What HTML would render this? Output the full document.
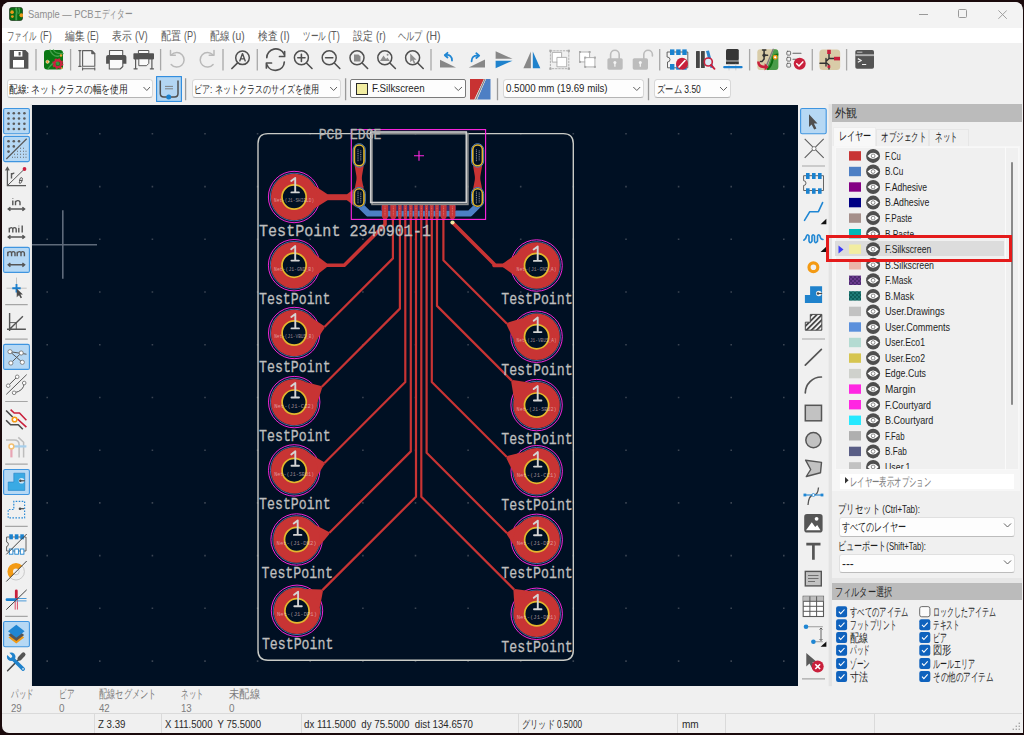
<!DOCTYPE html>
<html><head><meta charset="utf-8">
<style>
*{box-sizing:border-box;margin:0;padding:0}
html,body{width:1024px;height:735px;overflow:hidden;background:#1a0a0c;font-family:"Liberation Sans",sans-serif;font-size:12px;color:#222;position:relative}
.a{position:absolute}
.t{position:absolute;white-space:nowrap;line-height:1;transform-origin:0 0}
#win{position:absolute;left:2px;top:2px;width:1020.8px;height:731.2px;border-radius:8px 8px 0 7px;overflow:hidden;background:#f0f0f0}
.combo{position:absolute;top:79.4px;height:19px;background:#fdfdfd;border:1px solid #d8d8d8;border-bottom-color:#b4b4b4;border-radius:3.5px}
.chev{position:absolute;top:86.5px}
.st1{color:#7d7d7d;font-size:12px}
.st2{color:#2a2a2a;font-size:11px}
</style></head><body>
<div id="win">
  <div class="a" style="left:0;top:0;width:1020px;height:26px;background:#f3f3f3"></div>
  <div class="a" style="left:0;top:26px;width:1020px;height:15px;background:#fff"></div>
  <div class="a" style="left:0;top:710.5px;width:1020px;height:1px;background:#dadada"></div>
</div>
<!-- title -->
<svg class="a" style="left:8.6px;top:6.8px" width="14" height="14" viewBox="0 0 15 15">
  <rect x="0.5" y="0.5" width="14" height="14" rx="2.5" fill="#0b6b12" stroke="#1f3a1f" stroke-width="0.8"/>
  <path d="M7.5 0.5C8.5 4 8.5 6 7.8 9V14.5" stroke="#44a04a" stroke-width="2" fill="none"/>
  <path d="M10.5 0.5C11.5 3 11.5 5 10.5 7.5" stroke="#44a04a" stroke-width="1.3" fill="none"/>
  <circle cx="3.3" cy="5.5" r="1.9" fill="#ea9a1c"/><circle cx="3.6" cy="10.3" r="1.5" fill="#ea9a1c"/><circle cx="13.3" cy="8.8" r="2.1" fill="#ea9a1c"/>
</svg>
<svg class="a" style="left:27.50px;top:0;overflow:visible" width="1" height="1"><text x="0" y="18.33" font-size="11.5" fill="#8e8e8e" textLength="65.50" lengthAdjust="spacingAndGlyphs" style="white-space:pre">Sample — PCB</text></svg>
<svg class="a" style="left:93.75px;top:0;overflow:visible" width="1" height="1"><text x="0" y="18.33" font-size="11.5" fill="#8e8e8e" textLength="38.25" lengthAdjust="spacingAndGlyphs" style="white-space:pre">エディター</text></svg>
<div class="a" style="left:918.8px;top:13.8px;width:9px;height:1px;background:#999"></div>
<div class="a" style="left:958.1px;top:9.4px;width:8.6px;height:8.6px;border:1px solid #999;border-radius:1.5px"></div>
<svg class="a" style="left:997.8px;top:9.5px" width="9.2" height="9.2" viewBox="0 0 9.2 9.2"><path d="M0.4 0.4L8.8 8.8M8.8 0.4L0.4 8.8" stroke="#999" stroke-width="0.95"/></svg>
<!-- menu -->
<svg class="a" style="left:7.30px;top:0;overflow:visible" width="1" height="1"><text x="0" y="40.16" font-size="12" fill="#5c5c5c" textLength="29.30" lengthAdjust="spacingAndGlyphs" style="white-space:pre">ファイル</text></svg>
<svg class="a" style="left:39.60px;top:0;overflow:visible" width="1" height="1"><text x="0" y="40.16" font-size="12" fill="#5c5c5c" textLength="11.70" lengthAdjust="spacingAndGlyphs" style="white-space:pre">(F)</text></svg>
<svg class="a" style="left:64.70px;top:0;overflow:visible" width="1" height="1"><text x="0" y="40.16" font-size="12" fill="#5c5c5c" textLength="19.50" lengthAdjust="spacingAndGlyphs" style="white-space:pre">編集</text></svg>
<svg class="a" style="left:87.20px;top:0;overflow:visible" width="1" height="1"><text x="0" y="40.16" font-size="12" fill="#5c5c5c" textLength="11.70" lengthAdjust="spacingAndGlyphs" style="white-space:pre">(E)</text></svg>
<svg class="a" style="left:112.30px;top:0;overflow:visible" width="1" height="1"><text x="0" y="40.16" font-size="12" fill="#5c5c5c" textLength="19.50" lengthAdjust="spacingAndGlyphs" style="white-space:pre">表示</text></svg>
<svg class="a" style="left:135.00px;top:0;overflow:visible" width="1" height="1"><text x="0" y="40.16" font-size="12" fill="#5c5c5c" textLength="12.70" lengthAdjust="spacingAndGlyphs" style="white-space:pre">(V)</text></svg>
<svg class="a" style="left:160.60px;top:0;overflow:visible" width="1" height="1"><text x="0" y="40.16" font-size="12" fill="#5c5c5c" textLength="20.10" lengthAdjust="spacingAndGlyphs" style="white-space:pre">配置</text></svg>
<svg class="a" style="left:183.60px;top:0;overflow:visible" width="1" height="1"><text x="0" y="40.16" font-size="12" fill="#5c5c5c" textLength="12.20" lengthAdjust="spacingAndGlyphs" style="white-space:pre">(P)</text></svg>
<svg class="a" style="left:209.50px;top:0;overflow:visible" width="1" height="1"><text x="0" y="40.16" font-size="12" fill="#5c5c5c" textLength="19.50" lengthAdjust="spacingAndGlyphs" style="white-space:pre">配線</text></svg>
<svg class="a" style="left:232.00px;top:0;overflow:visible" width="1" height="1"><text x="0" y="40.16" font-size="12" fill="#5c5c5c" textLength="12.60" lengthAdjust="spacingAndGlyphs" style="white-space:pre">(u)</text></svg>
<svg class="a" style="left:257.80px;top:0;overflow:visible" width="1" height="1"><text x="0" y="40.16" font-size="12" fill="#5c5c5c" textLength="19.50" lengthAdjust="spacingAndGlyphs" style="white-space:pre">検査</text></svg>
<svg class="a" style="left:280.30px;top:0;overflow:visible" width="1" height="1"><text x="0" y="40.16" font-size="12" fill="#5c5c5c" textLength="9.70" lengthAdjust="spacingAndGlyphs" style="white-space:pre">(I)</text></svg>
<svg class="a" style="left:302.70px;top:0;overflow:visible" width="1" height="1"><text x="0" y="40.16" font-size="12" fill="#5c5c5c" textLength="22.50" lengthAdjust="spacingAndGlyphs" style="white-space:pre">ツール</text></svg>
<svg class="a" style="left:328.10px;top:0;overflow:visible" width="1" height="1"><text x="0" y="40.16" font-size="12" fill="#5c5c5c" textLength="11.70" lengthAdjust="spacingAndGlyphs" style="white-space:pre">(T)</text></svg>
<svg class="a" style="left:353.10px;top:0;overflow:visible" width="1" height="1"><text x="0" y="40.16" font-size="12" fill="#5c5c5c" textLength="19.90" lengthAdjust="spacingAndGlyphs" style="white-space:pre">設定</text></svg>
<svg class="a" style="left:376.00px;top:0;overflow:visible" width="1" height="1"><text x="0" y="40.16" font-size="12" fill="#5c5c5c" textLength="9.70" lengthAdjust="spacingAndGlyphs" style="white-space:pre">(r)</text></svg>
<svg class="a" style="left:398.40px;top:0;overflow:visible" width="1" height="1"><text x="0" y="40.16" font-size="12" fill="#5c5c5c" textLength="24.50" lengthAdjust="spacingAndGlyphs" style="white-space:pre">ヘルプ</text></svg>
<svg class="a" style="left:425.80px;top:0;overflow:visible" width="1" height="1"><text x="0" y="40.16" font-size="12" fill="#5c5c5c" textLength="14.60" lengthAdjust="spacingAndGlyphs" style="white-space:pre">(H)</text></svg>
<!-- toolbar icons -->
<svg class="a" style="left:0;top:0" width="1024" height="104" viewBox="0 0 1024 104">
<g fill="none" stroke-linecap="round" stroke-linejoin="round">
<!-- separators -->
<g stroke="#a8a8a8" stroke-width="1.3" stroke-linecap="butt">
<path d="M36 49V70.5M70.6 49V70.5M160.6 49V70.5M223 49V70.5M257.3 49V70.5M431 49V70.5M659.7 49V70.5M749.6 49V70.5M812.3 49V70.5M846.6 49V70.5"/>
<path d="M185.6 78.2V100.2M345.6 78.2V100.2M497.5 78.2V100.2M648.5 78.2V100.2" stroke="#9a9a9a"/>
</g>
<!-- save -->
<path d="M9.6 50H25.5L28.4 52.9V68.8H9.6Z" fill="#535353" stroke="none"/>
<rect x="14" y="51" width="8.4" height="5.6" fill="#fff" stroke="none"/>
<rect x="18.6" y="52" width="2" height="3.5" fill="#535353" stroke="none"/>
<rect x="13" y="60" width="11" height="7.6" fill="#fff" stroke="none"/>
<!-- board setup -->
<rect x="44" y="50" width="19" height="19.4" rx="3" fill="#0a7714" stroke="none"/>
<path d="M50 50C52 55 55 57 59 56M53.5 50C55 53 58 54 63 53.5M48 69C51 64 54 62 58 62" stroke="#42a04a" stroke-width="1.3"/>
<circle cx="47.5" cy="61.8" r="1.6" fill="#f0a030" stroke="#fff" stroke-width="0.5"/>
<circle cx="61" cy="55.5" r="1.3" fill="#f0a030" stroke="none"/>
<circle cx="61.5" cy="68" r="1" fill="#f0a030" stroke="none"/>
<g transform="translate(57.8 63.7)"><circle r="4.3" fill="none" stroke="#c9243f" stroke-width="2.6" stroke-dasharray="1.69 1.69" stroke-linecap="butt"/><circle r="3.4" fill="none" stroke="#c9243f" stroke-width="2.4"/><circle r="1.7" fill="#2f9a3c" stroke="none"/></g>
<!-- page settings -->
<g stroke="#5e5e5e" stroke-width="1.1">
<path d="M82.6 50.6H91.8L94.8 53.6V66.2H82.6Z" fill="#f4f4f4"/>
<path d="M91.8 50.6V53.6H94.8Z" fill="#5e5e5e"/>
<path d="M79.9 50.6V66.4M78.8 50.6H81M78.8 66.4H81M82.6 68.8H94.8M82.6 67.7V69.9M94.8 67.7V69.9"/>
</g>
<!-- print -->
<rect x="109.5" y="50.5" width="13.2" height="5" fill="#fafafa" stroke="#5a5a5a" stroke-width="1.1"/>
<path d="M106.1 57Q106.1 55 108.1 55H124.4Q126.4 55 126.4 57V63.8H106.1Z" fill="#535353" stroke="none"/>
<path d="M109.3 59.5H122.8V66.5L120.2 69H109.3Z" fill="#fafafa" stroke="#5a5a5a" stroke-width="1.1"/>
<!-- plot -->
<rect x="138.8" y="50.5" width="10" height="3" fill="#fafafa" stroke="#5a5a5a" stroke-width="1"/>
<rect x="133.4" y="53.2" width="20.6" height="6.2" rx="0.8" fill="#535353" stroke="none"/>
<path d="M138.8 59.4V65.7H146.5L148.8 63.4V59.4" fill="#fafafa" stroke="#5a5a5a" stroke-width="1"/>
<path d="M135.6 59.4V68.6M151.9 59.4V68.6M134 68.8H137.2M150.3 68.8H153.5" stroke="#5a5a5a" stroke-width="1.2"/>
<!-- undo redo -->
<path d="M171.5 54.8A7.3 7.3 0 1 1 171.2 64.5" stroke="#b9b9b9" stroke-width="1.5"/>
<path d="M170.5 50.5V55.3H175.3" stroke="#b9b9b9" stroke-width="1.5"/>
<path d="M212.8 54.8A7.3 7.3 0 1 0 213.1 64.5" stroke="#b9b9b9" stroke-width="1.5"/>
<path d="M214 50.5V55.3H209.2" stroke="#b9b9b9" stroke-width="1.5"/>
<!-- find -->
<circle cx="242.5" cy="57.8" r="6.8" stroke="#505050" stroke-width="1.5"/>
<path d="M237.6 62.8L231.9 68.5" stroke="#505050" stroke-width="1.7"/>
<path d="M239.8 60.9L242.5 53.6L245.2 60.9M240.6 58.9H244.4" stroke="#505050" stroke-width="1.4"/>
<!-- refresh -->
<path d="M266.8 57.6A9 8.6 0 0 1 284 54" stroke="#505050" stroke-width="1.7"/>
<path d="M284.6 51.5V56.5H279.5" stroke="#505050" stroke-width="1.7"/>
<path d="M284.3 62A9 8.6 0 0 1 267 65" stroke="#505050" stroke-width="1.7"/>
<path d="M266.4 68V63H271.5" stroke="#505050" stroke-width="1.7"/>
<!-- zoom in/out/fit/objects/selection -->
<g stroke="#505050" stroke-width="1.5">
<circle cx="301.4" cy="57.8" r="7"/><path d="M306.5 63L312 68.5M297.8 57.8H305M301.4 54.2V61.4" stroke-width="1.6"/>
<circle cx="329.2" cy="57.8" r="7"/><path d="M334.3 63L339.8 68.5M325.6 57.8H332.8" stroke-width="1.6"/>
<circle cx="357" cy="57.8" r="7"/><path d="M362.1 63L367.6 68.5" stroke-width="1.6"/>
<circle cx="384.8" cy="57.8" r="7"/><path d="M389.9 63L395.4 68.5" stroke-width="1.6"/>
<circle cx="412.6" cy="57.8" r="7"/><path d="M417.7 63L423.2 68.5" stroke-width="1.6"/>
</g>
<path d="M354 54.5H358.5L360.5 56.5V61.5H354Z" fill="#8a8a8a" stroke="none"/>
<path d="M380 61L383.5 55.5L386 59L387.5 57.5L389.8 61Z" fill="#8f8f8f" stroke="none"/><circle cx="387.6" cy="54.8" r="1" fill="#8f8f8f" stroke="none"/>
<path d="M410.2 53.5V62.2L412.3 60.3L414 63.8L415.4 63.1L413.8 59.7H416.6Z" fill="#8f8f8f" stroke="none"/>
<!-- rotate -->
<path d="M440 59.8V67.6H456Z" fill="#878787" stroke="none"/>
<path d="M452 60.5C452 56.5 450 54.5 445.5 55" stroke="#1f86d3" stroke-width="1.8"/>
<path d="M447.5 52.8L444.8 55.2L447.5 57.5" stroke="#1f86d3" stroke-width="1.8"/>
<path d="M468.7 67.6H485V59.4Z" fill="#878787" stroke="none"/>
<path d="M471.6 61.3C471.6 57.3 473.6 55.3 478.2 55.6" stroke="#1f86d3" stroke-width="1.8"/>
<path d="M476.3 53.2L479.2 55.6L476.3 58" stroke="#1f86d3" stroke-width="1.8"/>
<!-- flip / mirror -->
<path d="M495.6 51.3V58.8H512.5Z" fill="#878787" stroke="none"/>
<path d="M495.6 60.7H512.5L495.6 68.2Z" fill="#1f82cc" stroke="none"/>
<path d="M523.4 68.2L530.9 51.6V68.2Z" fill="#878787" stroke="none"/>
<path d="M532.8 51.6V68.2H540.3Z" fill="#1f82cc" stroke="none"/>
<!-- group -->
<rect x="550.4" y="50.8" width="18.4" height="17.9" stroke="#a9a9a9" stroke-width="0.9" stroke-dasharray="1.6 1.6"/>
<g fill="#a9a9a9" stroke="none"><rect x="549.3" y="49.7" width="2.2" height="2.2"/><rect x="567.7" y="49.7" width="2.2" height="2.2"/><rect x="549.3" y="67.6" width="2.2" height="2.2"/><rect x="567.7" y="67.6" width="2.2" height="2.2"/></g>
<rect x="552.6" y="52.4" width="9" height="9.7" fill="#fff" stroke="#a9a9a9" stroke-width="0.9"/>
<rect x="557.3" y="57.4" width="9.4" height="9.4" fill="#fff" stroke="#a9a9a9" stroke-width="0.9"/>
<!-- ungroup -->
<rect x="580" y="52" width="9.6" height="9.9" fill="#fff" stroke="#a9a9a9" stroke-width="0.9"/>
<rect x="585.2" y="57.6" width="9.7" height="9.3" fill="#fff" stroke="#a9a9a9" stroke-width="0.9"/>
<g fill="#a9a9a9" stroke="none"><rect x="579" y="51" width="2" height="2"/><rect x="588.6" y="51" width="2" height="2"/><rect x="579" y="60.9" width="2" height="2"/><rect x="584.2" y="56.6" width="2" height="2"/><rect x="593.9" y="56.6" width="2" height="2"/><rect x="584.2" y="65.9" width="2" height="2"/><rect x="593.9" y="65.9" width="2" height="2"/></g>
<!-- lock / unlock -->
<path d="M610.6 58.5V54.5A4.3 4.3 0 0 1 619.2 54.5V58.5" stroke="#bcbcbc" stroke-width="1.6"/>
<rect x="607.4" y="58.2" width="15.3" height="11.5" rx="1.6" fill="#bcbcbc" stroke="none"/>
<circle cx="614.9" cy="62.6" r="1.5" fill="#f4f4f4" stroke="none"/><path d="M614.9 63V66.8" stroke="#f4f4f4" stroke-width="1.3" stroke-linecap="butt"/>
<path d="M643.8 58.5V54.5A4.3 4.3 0 0 1 652.4 54.5V56" stroke="#bcbcbc" stroke-width="1.6"/>
<rect x="632.7" y="58.2" width="15.3" height="11.5" rx="1.6" fill="#bcbcbc" stroke="none"/>
<circle cx="640.3" cy="62.6" r="1.5" fill="#f4f4f4" stroke="none"/><path d="M640.3 63V66.8" stroke="#f4f4f4" stroke-width="1.3" stroke-linecap="butt"/>
<!-- footprint editor -->
<path d="M667.5 52H687.8V67.8H667.5V62A2.5 2.5 0 0 0 667.5 57Z" fill="#f4f4f4" stroke="#555" stroke-width="0.9"/>
<g fill="#1a82cf" stroke="none"><rect x="670" y="49.4" width="4.4" height="5.6"/><rect x="676.2" y="49.4" width="4.4" height="5.6"/><rect x="682.3" y="49.4" width="4.4" height="5.6"/><rect x="670" y="64" width="4.4" height="5.7"/><rect x="676.2" y="64" width="4.4" height="5.7"/><rect x="682.3" y="64" width="4.4" height="5.7"/></g>
<circle cx="682" cy="63.8" r="6" fill="#c8203c" stroke="none"/>
<path d="M679 67L685 60.5" stroke="#fff" stroke-width="1.6"/>
<!-- library browser -->
<rect x="696" y="51" width="3.8" height="17" rx="0.6" fill="#454545" stroke="none"/>
<rect x="701" y="51" width="3.8" height="17" rx="0.6" fill="#454545" stroke="none"/>
<path d="M706 51L709 50.5L713.5 67.5L710.5 68Z" fill="#2a86cf" stroke="none"/>
<circle cx="708.3" cy="62" r="4" fill="#d9ecf7" stroke="#c9203c" stroke-width="1.6"/>
<path d="M711 65L714.5 68.8" stroke="#c9203c" stroke-width="1.9"/>
<!-- chip -->
<rect x="726" y="49" width="12.8" height="11.5" rx="1.5" fill="#363636" stroke="none"/>
<rect x="726" y="60.3" width="12.8" height="1.6" fill="#7a7a7a" stroke="none"/>
<rect x="726" y="61.9" width="12.8" height="2.3" fill="#363636" stroke="none"/>
<path d="M729 64.2V70M735.8 64.2V70" stroke="#c8c8c8" stroke-width="0.8"/>
<rect x="723.2" y="66" width="19.4" height="2.2" rx="1" fill="#1a7fd0" stroke="none"/>
<!-- update pcb -->
<rect x="757.3" y="49.2" width="21" height="20.8" rx="3" fill="#d9cca8" stroke="none"/>
<path d="M773.8 49.2H775.3Q778.3 49.2 778.3 52.2V67Q778.3 70 775.3 70H766.3Z" fill="#4a9c4a" stroke="none"/>
<path d="M778.3 54.5Q773.5 54 772.5 60Q771.5 66 767.2 69.6" stroke="#0b6e12" stroke-width="2" stroke-linecap="butt"/>
<path d="M773.2 49.3L766.1 66.5" stroke="#7c7c7c" stroke-width="1.4"/>
<circle cx="775.2" cy="57.3" r="1.8" fill="#fff" stroke="#f39a14" stroke-width="1.3"/>
<path d="M762.5 49.9H765.8M764.1 50V59M764.1 55.2H767.6M764.1 59L762 61.6H760.5" stroke="#333" stroke-width="1.5"/>
<circle cx="764.1" cy="55.2" r="1.7" fill="#333" stroke="none"/>
<path d="M758.4 61.5Q758.3 66.6 763.8 66.9H765.5" stroke="#c9203c" stroke-width="2.6" stroke-linecap="butt"/>
<path d="M764.6 63.2L768.7 66.9L764.6 70.5Z" fill="#c9203c" stroke="none"/>
<!-- DRC -->
<g stroke="#636363" stroke-width="0.9"><rect x="786.8" y="51.3" width="3.8" height="3.8" rx="0.8"/><rect x="786.8" y="57.3" width="3.8" height="3.8" rx="0.8"/><rect x="786.8" y="63.3" width="3.8" height="3.8" rx="0.8"/><path d="M793 53.2H801M793 59.2H797" stroke-width="1.1"/></g>
<circle cx="799.7" cy="63.8" r="6" fill="#c9203c" stroke="none"/>
<path d="M796.7 63.8L799 66L802.8 61.9" stroke="#fff" stroke-width="1.5"/>
<!-- transistor -->
<rect x="819.4" y="49.4" width="20.8" height="20.6" rx="3.5" fill="#d9cca8" stroke="none"/>
<path d="M829 54V58.5L826 61.5M829 69V65L826 62.5M826 58.5V66M820 63.3H826M829 58.5H834" stroke="#333" stroke-width="1.4"/>
<rect x="827.2" y="49.8" width="3.6" height="4.2" fill="#c9203c" stroke="none"/>
<rect x="834" y="56.8" width="6" height="3.6" fill="#c9203c" stroke="none"/>
<rect x="827.5" y="65.3" width="2.8" height="2.6" fill="#c9203c" stroke="none"/>
<!-- console -->
<rect x="855.3" y="50" width="18.7" height="18.8" rx="1.8" fill="#545454" stroke="none"/>
<rect x="855.3" y="54.2" width="18.7" height="1.9" fill="#b0b0b0" stroke="none"/>
<path d="M857.5 52.2H862" stroke="#ddd" stroke-width="0.8" stroke-dasharray="0.8 0.6"/>
<path d="M857.8 58.6L861.3 60.5L857.8 62.3M862 64.5H866.2" stroke="#f0f0f0" stroke-width="1.2" stroke-linecap="butt"/>
</g>
<!-- track width btn -->
<rect x="156.6" y="76.6" width="24.8" height="24.8" fill="#b3d6f3" stroke="#2b8ade" stroke-width="1.1"/>
<path d="M160.3 80.5V93.5Q160.3 97 163.8 97H174.5Q178 97 178 93.5V80.5" fill="none" stroke="#505050" stroke-width="1.5"/>
<path d="M165 86.4H173M165 88.8H173" stroke="#777" stroke-width="0.9"/>
<circle cx="168.7" cy="97" r="2.5" fill="#1a82cf"/>
</svg>

<!-- combos -->
<div class="combo" style="left:7px;width:146.2px"></div>
<svg class="a" style="left:9.40px;top:0;overflow:visible" width="1" height="1"><text x="0" y="92.78" font-size="11.2" fill="#1e1e1e" textLength="118.60" lengthAdjust="spacingAndGlyphs" style="white-space:pre">配線: ネットクラスの幅を使用</text></svg>
<div class="combo" style="left:191.5px;width:149px"></div>
<svg class="a" style="left:194.40px;top:0;overflow:visible" width="1" height="1"><text x="0" y="92.78" font-size="11.2" fill="#1e1e1e" textLength="125.30" lengthAdjust="spacingAndGlyphs" style="white-space:pre">ビア: ネットクラスのサイズを使用</text></svg>
<div class="combo" style="left:350.3px;width:115.5px;border:1px solid #7a7a7a;border-radius:2px;top:79.3px;height:18.5px"></div>
<div class="a" style="left:356.1px;top:82.6px;width:11.8px;height:12.2px;background:#f2eda1;border:1px solid #2a2a2a"></div>
<svg class="a" style="left:372.40px;top:0;overflow:visible" width="1" height="1"><text x="0" y="91.79" font-size="10.5" fill="#1e1e1e" textLength="52.60" lengthAdjust="spacingAndGlyphs" style="white-space:pre">F.Silkscreen</text></svg>
<svg class="a" style="left:470.3px;top:78.8px" width="21" height="21" viewBox="0 0 21 21"><path d="M0 0H14L4.4 20.6H0Z" fill="#c83232"/><path d="M16 0H20.5V20.6H7.1Z" fill="#4d7fc4"/><path d="M14 0H16L7.1 20.6H4.4Z" fill="#d8d8d8"/><path d="M15 0L5.8 20.6" stroke="#666" stroke-width="0.8"/></svg>
<div class="combo" style="left:503px;width:140.7px"></div>
<svg class="a" style="left:505.80px;top:0;overflow:visible" width="1" height="1"><text x="0" y="92.32" font-size="10.3" fill="#1e1e1e" textLength="101.60" lengthAdjust="spacingAndGlyphs" style="white-space:pre">0.5000 mm (19.69 mils)</text></svg>
<div class="combo" style="left:653.5px;width:77px"></div>
<svg class="a" style="left:656.50px;top:0;overflow:visible" width="1" height="1"><text x="0" y="92.78" font-size="11.2" fill="#1e1e1e" textLength="43.80" lengthAdjust="spacingAndGlyphs" style="white-space:pre">ズーム 3.50</text></svg>
<svg class="a" style="left:0;top:0" width="1024" height="104" viewBox="0 0 1024 104"><g fill="none" stroke="#606060" stroke-width="1"><path d="M143.5 87L146.8 90.5L150 87M330.2 87L333.6 90.5L337 87M454.6 87L458.3 90.5L462 87M633.3 87L636.8 90.5L640.2 87M720 87L723.5 90.5L727 87"/></g></svg>

<!-- CANVAS -->
<svg class="a" style="left:32px;top:105px" width="766" height="581" viewBox="32 105 766 581">
<rect x="32" y="105" width="766" height="581" fill="#001023"/>
<path d="M46.4 133.0h1.6v1.6h-1.6zM46.4 185.8h1.6v1.6h-1.6zM46.4 238.5h1.6v1.6h-1.6zM46.4 291.2h1.6v1.6h-1.6zM46.4 343.9h1.6v1.6h-1.6zM46.4 396.7h1.6v1.6h-1.6zM46.4 449.4h1.6v1.6h-1.6zM46.4 502.1h1.6v1.6h-1.6zM46.4 554.8h1.6v1.6h-1.6zM46.4 607.5h1.6v1.6h-1.6zM46.4 660.3h1.6v1.6h-1.6zM99.0 133.0h1.6v1.6h-1.6zM99.0 185.8h1.6v1.6h-1.6zM99.0 238.5h1.6v1.6h-1.6zM99.0 291.2h1.6v1.6h-1.6zM99.0 343.9h1.6v1.6h-1.6zM99.0 396.7h1.6v1.6h-1.6zM99.0 449.4h1.6v1.6h-1.6zM99.0 502.1h1.6v1.6h-1.6zM99.0 554.8h1.6v1.6h-1.6zM99.0 607.5h1.6v1.6h-1.6zM99.0 660.3h1.6v1.6h-1.6zM151.6 133.0h1.6v1.6h-1.6zM151.6 185.8h1.6v1.6h-1.6zM151.6 238.5h1.6v1.6h-1.6zM151.6 291.2h1.6v1.6h-1.6zM151.6 343.9h1.6v1.6h-1.6zM151.6 396.7h1.6v1.6h-1.6zM151.6 449.4h1.6v1.6h-1.6zM151.6 502.1h1.6v1.6h-1.6zM151.6 554.8h1.6v1.6h-1.6zM151.6 607.5h1.6v1.6h-1.6zM151.6 660.3h1.6v1.6h-1.6zM204.2 133.0h1.6v1.6h-1.6zM204.2 185.8h1.6v1.6h-1.6zM204.2 238.5h1.6v1.6h-1.6zM204.2 291.2h1.6v1.6h-1.6zM204.2 343.9h1.6v1.6h-1.6zM204.2 396.7h1.6v1.6h-1.6zM204.2 449.4h1.6v1.6h-1.6zM204.2 502.1h1.6v1.6h-1.6zM204.2 554.8h1.6v1.6h-1.6zM204.2 607.5h1.6v1.6h-1.6zM204.2 660.3h1.6v1.6h-1.6zM256.8 133.0h1.6v1.6h-1.6zM256.8 185.8h1.6v1.6h-1.6zM256.8 238.5h1.6v1.6h-1.6zM256.8 291.2h1.6v1.6h-1.6zM256.8 343.9h1.6v1.6h-1.6zM256.8 396.7h1.6v1.6h-1.6zM256.8 449.4h1.6v1.6h-1.6zM256.8 502.1h1.6v1.6h-1.6zM256.8 554.8h1.6v1.6h-1.6zM256.8 607.5h1.6v1.6h-1.6zM256.8 660.3h1.6v1.6h-1.6zM309.4 133.0h1.6v1.6h-1.6zM309.4 185.8h1.6v1.6h-1.6zM309.4 238.5h1.6v1.6h-1.6zM309.4 291.2h1.6v1.6h-1.6zM309.4 343.9h1.6v1.6h-1.6zM309.4 396.7h1.6v1.6h-1.6zM309.4 449.4h1.6v1.6h-1.6zM309.4 502.1h1.6v1.6h-1.6zM309.4 554.8h1.6v1.6h-1.6zM309.4 607.5h1.6v1.6h-1.6zM309.4 660.3h1.6v1.6h-1.6zM362.1 133.0h1.6v1.6h-1.6zM362.1 185.8h1.6v1.6h-1.6zM362.1 238.5h1.6v1.6h-1.6zM362.1 291.2h1.6v1.6h-1.6zM362.1 343.9h1.6v1.6h-1.6zM362.1 396.7h1.6v1.6h-1.6zM362.1 449.4h1.6v1.6h-1.6zM362.1 502.1h1.6v1.6h-1.6zM362.1 554.8h1.6v1.6h-1.6zM362.1 607.5h1.6v1.6h-1.6zM362.1 660.3h1.6v1.6h-1.6zM414.7 133.0h1.6v1.6h-1.6zM414.7 185.8h1.6v1.6h-1.6zM414.7 238.5h1.6v1.6h-1.6zM414.7 291.2h1.6v1.6h-1.6zM414.7 343.9h1.6v1.6h-1.6zM414.7 396.7h1.6v1.6h-1.6zM414.7 449.4h1.6v1.6h-1.6zM414.7 502.1h1.6v1.6h-1.6zM414.7 554.8h1.6v1.6h-1.6zM414.7 607.5h1.6v1.6h-1.6zM414.7 660.3h1.6v1.6h-1.6zM467.3 133.0h1.6v1.6h-1.6zM467.3 185.8h1.6v1.6h-1.6zM467.3 238.5h1.6v1.6h-1.6zM467.3 291.2h1.6v1.6h-1.6zM467.3 343.9h1.6v1.6h-1.6zM467.3 396.7h1.6v1.6h-1.6zM467.3 449.4h1.6v1.6h-1.6zM467.3 502.1h1.6v1.6h-1.6zM467.3 554.8h1.6v1.6h-1.6zM467.3 607.5h1.6v1.6h-1.6zM467.3 660.3h1.6v1.6h-1.6zM519.9 133.0h1.6v1.6h-1.6zM519.9 185.8h1.6v1.6h-1.6zM519.9 238.5h1.6v1.6h-1.6zM519.9 291.2h1.6v1.6h-1.6zM519.9 343.9h1.6v1.6h-1.6zM519.9 396.7h1.6v1.6h-1.6zM519.9 449.4h1.6v1.6h-1.6zM519.9 502.1h1.6v1.6h-1.6zM519.9 554.8h1.6v1.6h-1.6zM519.9 607.5h1.6v1.6h-1.6zM519.9 660.3h1.6v1.6h-1.6zM572.5 133.0h1.6v1.6h-1.6zM572.5 185.8h1.6v1.6h-1.6zM572.5 238.5h1.6v1.6h-1.6zM572.5 291.2h1.6v1.6h-1.6zM572.5 343.9h1.6v1.6h-1.6zM572.5 396.7h1.6v1.6h-1.6zM572.5 449.4h1.6v1.6h-1.6zM572.5 502.1h1.6v1.6h-1.6zM572.5 554.8h1.6v1.6h-1.6zM572.5 607.5h1.6v1.6h-1.6zM572.5 660.3h1.6v1.6h-1.6zM625.2 133.0h1.6v1.6h-1.6zM625.2 185.8h1.6v1.6h-1.6zM625.2 238.5h1.6v1.6h-1.6zM625.2 291.2h1.6v1.6h-1.6zM625.2 343.9h1.6v1.6h-1.6zM625.2 396.7h1.6v1.6h-1.6zM625.2 449.4h1.6v1.6h-1.6zM625.2 502.1h1.6v1.6h-1.6zM625.2 554.8h1.6v1.6h-1.6zM625.2 607.5h1.6v1.6h-1.6zM625.2 660.3h1.6v1.6h-1.6zM677.8 133.0h1.6v1.6h-1.6zM677.8 185.8h1.6v1.6h-1.6zM677.8 238.5h1.6v1.6h-1.6zM677.8 291.2h1.6v1.6h-1.6zM677.8 343.9h1.6v1.6h-1.6zM677.8 396.7h1.6v1.6h-1.6zM677.8 449.4h1.6v1.6h-1.6zM677.8 502.1h1.6v1.6h-1.6zM677.8 554.8h1.6v1.6h-1.6zM677.8 607.5h1.6v1.6h-1.6zM677.8 660.3h1.6v1.6h-1.6zM730.4 133.0h1.6v1.6h-1.6zM730.4 185.8h1.6v1.6h-1.6zM730.4 238.5h1.6v1.6h-1.6zM730.4 291.2h1.6v1.6h-1.6zM730.4 343.9h1.6v1.6h-1.6zM730.4 396.7h1.6v1.6h-1.6zM730.4 449.4h1.6v1.6h-1.6zM730.4 502.1h1.6v1.6h-1.6zM730.4 554.8h1.6v1.6h-1.6zM730.4 607.5h1.6v1.6h-1.6zM730.4 660.3h1.6v1.6h-1.6zM783.0 133.0h1.6v1.6h-1.6zM783.0 185.8h1.6v1.6h-1.6zM783.0 238.5h1.6v1.6h-1.6zM783.0 291.2h1.6v1.6h-1.6zM783.0 343.9h1.6v1.6h-1.6zM783.0 396.7h1.6v1.6h-1.6zM783.0 449.4h1.6v1.6h-1.6zM783.0 502.1h1.6v1.6h-1.6zM783.0 554.8h1.6v1.6h-1.6zM783.0 607.5h1.6v1.6h-1.6zM783.0 660.3h1.6v1.6h-1.6z" fill="#3a4452"/>
<path d="M268 133.6H563.3Q573.3 133.6 573.3 143.6V650.3Q573.3 660.3 563.3 660.3H268Q258 660.3 258 650.3V143.6Q258 133.6 268 133.6Z" fill="none" stroke="#c9cbc6" stroke-width="1.4"/>
<path d="M359.3 200L361 206.3L368.3 213.5H469.8L477.3 206L477.8 200" fill="none" stroke="#4d7fc4" stroke-width="6.2" stroke-linejoin="round"/>
<path d="M392.9 218.0L392.9 258.4L324.4 327.0M399.9 218.0L399.9 308.6L321.6 387.0M405.3 218.0L405.3 382.0L324.2 463.2M410.8 218.0L410.8 451.4L329.2 533.0M416.0 218.0L416.0 496.7L322.2 590.4M421.3 218.0L421.3 496.7L514.2 589.6M426.6 218.0L426.6 452.8L507.1 533.3M431.8 218.0L431.8 382.0L506.8 457.0M437.0 218.0L437.0 305.9L512.0 380.9M443.4 218.0L443.4 260.2L507.0 323.8" fill="none" stroke="#c83434" stroke-width="2.2" stroke-linejoin="round"/>
<path d="M385 218V224.5L344.3 265.3H326M452.5 222.5L494.5 264.5L494 265.4H506" fill="none" stroke="#c83434" stroke-width="3.6" stroke-linejoin="round"/>
<path d="M326 197.2H356" fill="none" stroke="#c83434" stroke-width="6" />
<path d="M353.7 160L356.4 176Q356.7 178 356.4 180L353.7 194H364.7L362.0 180Q361.7 178 362.0 176L364.7 160Z" fill="#c83434"/>
<path d="M472.1 160L474.8 176Q475.1 178 474.8 180L472.1 194H483.1L480.4 180Q480.1 178 480.4 176L483.1 160Z" fill="#c83434"/>
<path d="M347 194.2L355 188V206.5L347 200.2Z" fill="#c83434"/>
<rect x="353.1" y="143.7" width="12.2" height="23.4" rx="6.1" fill="#001023" stroke="#4d7fc4" stroke-width="1"/>
<rect x="354.4" y="145.0" width="9.6" height="20.8" rx="4.8" fill="none" stroke="#e3b72e" stroke-width="1.6"/>
<path d="M358.0 149.4V161.4M360.8 150.4V160.4" stroke="#b0a8a8" stroke-width="0.9" stroke-dasharray="1 0.8"/>
<rect x="353.1" y="187.5" width="12.2" height="20.0" rx="6.1" fill="#001023" stroke="#4d7fc4" stroke-width="1"/>
<rect x="354.4" y="188.8" width="9.6" height="17.4" rx="4.8" fill="none" stroke="#e3b72e" stroke-width="1.6"/>
<path d="M358.0 191.5V203.5M360.8 192.5V202.5" stroke="#b0a8a8" stroke-width="0.9" stroke-dasharray="1 0.8"/>
<rect x="471.5" y="143.7" width="12.2" height="23.4" rx="6.1" fill="#001023" stroke="#4d7fc4" stroke-width="1"/>
<rect x="472.8" y="145.0" width="9.6" height="20.8" rx="4.8" fill="none" stroke="#e3b72e" stroke-width="1.6"/>
<path d="M476.4 149.4V161.4M479.2 150.4V160.4" stroke="#b0a8a8" stroke-width="0.9" stroke-dasharray="1 0.8"/>
<rect x="471.5" y="187.5" width="12.2" height="20.0" rx="6.1" fill="#001023" stroke="#4d7fc4" stroke-width="1"/>
<rect x="472.8" y="188.8" width="9.6" height="17.4" rx="4.8" fill="none" stroke="#e3b72e" stroke-width="1.6"/>
<path d="M476.4 191.5V203.5M479.2 192.5V202.5" stroke="#b0a8a8" stroke-width="0.9" stroke-dasharray="1 0.8"/>
<rect x="381" y="205.5" width="75" height="5" fill="#3a2a6e"/>
<path d="M381.9 205H388.1V217L385.9 220H384.1L381.9 217ZM390.3 205H396.3V217L394.2 220H392.4L390.3 217ZM398.1 205H401.6V217L400.7 220H398.9L398.1 217ZM403.6 205H407.1V217L406.2 220H404.4L403.6 217ZM409.1 205H412.6V217L411.7 220H409.9L409.1 217ZM414.2 205H417.8V217L416.9 220H415.1L414.2 217ZM419.6 205H423.1V217L422.2 220H420.4L419.6 217ZM424.8 205H428.2V217L427.4 220H425.6L424.8 217ZM429.8 205H433.6V217L432.6 220H430.8L429.8 217ZM435.2 205H438.8V217L437.9 220H436.1L435.2 217ZM440.6 205H446.6V217L444.5 220H442.7L440.6 217ZM449.4 205H455.4V217L453.3 220H451.5L449.4 217Z" fill="#c83434" fill-opacity="0.97"/>
<path d="M385.0 206.5V216M393.3 206.5V216M399.8 206.5V216M405.3 206.5V216M410.8 206.5V216M416.0 206.5V216M421.3 206.5V216M426.5 206.5V216M431.7 206.5V216M437.0 206.5V216M443.6 206.5V216M452.4 206.5V216" stroke="#f0b0b0" stroke-width="0.7" stroke-dasharray="0.9 0.7" opacity="0.7"/>
<circle cx="452.5" cy="222.5" r="2.1" fill="#eee9a0"/>
<rect x="372.0" y="133.5" width="95.9" height="70.9" fill="none" stroke="#8c8e8e" stroke-width="1.6"/>
<rect x="370.7" y="132.0" width="95.6" height="70.5" fill="none" stroke="#cfcfcf" stroke-width="1.6"/>
<rect x="351.3" y="129.6" width="134.3" height="89.8" fill="none" stroke="#ff26e2" stroke-width="1.1"/>
<path d="M414 155.7H424M419 150.7V160.7" stroke="#ff26e2" stroke-width="1.1"/>
<circle cx="294.1" cy="197.0" r="25.7" fill="none" stroke="#ff26e2" stroke-width="0.95"/>
<circle cx="294.1" cy="197.0" r="23.8" fill="none" stroke="#4d7fc4" stroke-width="0.8"/>
<path d="M314.1 208.7L327.5 200.2L327.5 194.2L314.3 185.5Z" fill="#c83434"/>
<circle cx="294.1" cy="197.0" r="23.2" fill="#c83434"/>
<circle cx="294.1" cy="197.0" r="12.1" fill="#001023" stroke="#e3b72e" stroke-width="1.7"/>
<path d="M291.2 181.0L295.2 177.9V192.4M291.4 192.4H298.9" fill="none" stroke="#d4d4d4" stroke-width="1.9" stroke-linecap="round" stroke-linejoin="round"/>
<text x="294.1" y="202.4" font-size="5.2" fill="#f0d4d4" fill-opacity="0.62" text-anchor="middle" textLength="40" lengthAdjust="spacingAndGlyphs" font-family="Liberation Mono">Net-(J1-SHIELD)</text>
<circle cx="294.1" cy="265.2" r="25.7" fill="none" stroke="#ff26e2" stroke-width="0.95"/>
<circle cx="294.1" cy="265.2" r="23.8" fill="none" stroke="#4d7fc4" stroke-width="0.8"/>
<path d="M314.2 276.9L327.0 267.1L327.0 263.5L314.2 253.7Z" fill="#c83434"/>
<circle cx="294.1" cy="265.2" r="23.2" fill="#c83434"/>
<circle cx="294.1" cy="265.2" r="12.1" fill="#001023" stroke="#e3b72e" stroke-width="1.7"/>
<path d="M291.2 249.2L295.2 246.1V260.6M291.4 260.6H298.9" fill="none" stroke="#d4d4d4" stroke-width="1.9" stroke-linecap="round" stroke-linejoin="round"/>
<text x="294.1" y="270.6" font-size="5.2" fill="#f0d4d4" fill-opacity="0.62" text-anchor="middle" textLength="40" lengthAdjust="spacingAndGlyphs" font-family="Liberation Mono">Net-(J1-GND_B)</text>
<circle cx="294.2" cy="333.0" r="25.7" fill="none" stroke="#ff26e2" stroke-width="0.95"/>
<circle cx="294.2" cy="333.0" r="23.8" fill="none" stroke="#4d7fc4" stroke-width="0.8"/>
<path d="M316.2 340.5L324.6 328.1L324.2 325.9L311.6 317.7Z" fill="#c83434"/>
<circle cx="294.2" cy="333.0" r="23.2" fill="#c83434"/>
<circle cx="294.2" cy="333.0" r="12.1" fill="#001023" stroke="#e3b72e" stroke-width="1.7"/>
<path d="M291.3 317.0L295.3 313.9V328.4M291.5 328.4H299.0" fill="none" stroke="#d4d4d4" stroke-width="1.9" stroke-linecap="round" stroke-linejoin="round"/>
<text x="294.2" y="338.4" font-size="5.2" fill="#f0d4d4" fill-opacity="0.62" text-anchor="middle" textLength="40" lengthAdjust="spacingAndGlyphs" font-family="Liberation Mono">Net-(J1-VBUS_B)</text>
<circle cx="294.2" cy="402.1" r="25.7" fill="none" stroke="#ff26e2" stroke-width="0.95"/>
<circle cx="294.2" cy="402.1" r="23.8" fill="none" stroke="#4d7fc4" stroke-width="0.8"/>
<path d="M317.4 402.6L322.1 388.0L321.1 386.0L306.2 382.2Z" fill="#c83434"/>
<circle cx="294.2" cy="402.1" r="23.2" fill="#c83434"/>
<circle cx="294.2" cy="402.1" r="12.1" fill="#001023" stroke="#e3b72e" stroke-width="1.7"/>
<path d="M291.3 386.1L295.3 383.0V397.5M291.5 397.5H299.0" fill="none" stroke="#d4d4d4" stroke-width="1.9" stroke-linecap="round" stroke-linejoin="round"/>
<text x="294.2" y="407.5" font-size="5.2" fill="#f0d4d4" fill-opacity="0.62" text-anchor="middle" textLength="40" lengthAdjust="spacingAndGlyphs" font-family="Liberation Mono">Net-(J1-CC2)</text>
<circle cx="294.2" cy="470.4" r="25.7" fill="none" stroke="#ff26e2" stroke-width="0.95"/>
<circle cx="294.2" cy="470.4" r="23.8" fill="none" stroke="#4d7fc4" stroke-width="0.8"/>
<path d="M316.4 477.0L324.5 464.3L323.9 462.1L311.0 454.4Z" fill="#c83434"/>
<circle cx="294.2" cy="470.4" r="23.2" fill="#c83434"/>
<circle cx="294.2" cy="470.4" r="12.1" fill="#001023" stroke="#e3b72e" stroke-width="1.7"/>
<path d="M291.3 454.4L295.3 451.3V465.8M291.5 465.8H299.0" fill="none" stroke="#d4d4d4" stroke-width="1.9" stroke-linecap="round" stroke-linejoin="round"/>
<text x="294.2" y="475.8" font-size="5.2" fill="#f0d4d4" fill-opacity="0.62" text-anchor="middle" textLength="40" lengthAdjust="spacingAndGlyphs" font-family="Liberation Mono">Net-(J1-SBU1)</text>
<circle cx="296.6" cy="539.5" r="25.7" fill="none" stroke="#ff26e2" stroke-width="0.95"/>
<circle cx="296.6" cy="539.5" r="23.8" fill="none" stroke="#4d7fc4" stroke-width="0.8"/>
<path d="M318.6 546.9L329.4 534.1L329.0 531.9L314.0 524.2Z" fill="#c83434"/>
<circle cx="296.6" cy="539.5" r="23.2" fill="#c83434"/>
<circle cx="296.6" cy="539.5" r="12.1" fill="#001023" stroke="#e3b72e" stroke-width="1.7"/>
<path d="M293.7 523.5L297.7 520.4V534.9M293.9 534.9H301.4" fill="none" stroke="#d4d4d4" stroke-width="1.9" stroke-linecap="round" stroke-linejoin="round"/>
<text x="296.6" y="544.9" font-size="5.2" fill="#f0d4d4" fill-opacity="0.62" text-anchor="middle" textLength="40" lengthAdjust="spacingAndGlyphs" font-family="Liberation Mono">Net-(J1-DN2)</text>
<circle cx="297.0" cy="610.8" r="25.7" fill="none" stroke="#ff26e2" stroke-width="0.95"/>
<circle cx="297.0" cy="610.8" r="23.8" fill="none" stroke="#4d7fc4" stroke-width="0.8"/>
<path d="M319.9 607.2L322.9 591.3L321.5 589.5L305.3 589.1Z" fill="#c83434"/>
<circle cx="297.0" cy="610.8" r="23.2" fill="#c83434"/>
<circle cx="297.0" cy="610.8" r="12.1" fill="#001023" stroke="#e3b72e" stroke-width="1.7"/>
<path d="M294.1 594.8L298.1 591.7V606.2M294.3 606.2H301.8" fill="none" stroke="#d4d4d4" stroke-width="1.9" stroke-linecap="round" stroke-linejoin="round"/>
<text x="297.0" y="616.2" font-size="5.2" fill="#f0d4d4" fill-opacity="0.62" text-anchor="middle" textLength="40" lengthAdjust="spacingAndGlyphs" font-family="Liberation Mono">Net-(J1-DP1)</text>
<circle cx="536.6" cy="265.5" r="25.7" fill="none" stroke="#ff26e2" stroke-width="0.95"/>
<circle cx="536.6" cy="265.5" r="23.8" fill="none" stroke="#4d7fc4" stroke-width="0.8"/>
<path d="M516.5 253.8L503.0 263.6L503.0 267.2L516.5 277.0Z" fill="#c83434"/>
<circle cx="536.6" cy="265.5" r="23.2" fill="#c83434"/>
<circle cx="536.6" cy="265.5" r="12.1" fill="#001023" stroke="#e3b72e" stroke-width="1.7"/>
<path d="M533.7 249.5L537.7 246.4V260.9M533.9 260.9H541.4" fill="none" stroke="#d4d4d4" stroke-width="1.9" stroke-linecap="round" stroke-linejoin="round"/>
<text x="536.6" y="270.9" font-size="5.2" fill="#f0d4d4" fill-opacity="0.62" text-anchor="middle" textLength="40" lengthAdjust="spacingAndGlyphs" font-family="Liberation Mono">Net-(J1-GND_A)</text>
<circle cx="536.6" cy="336.7" r="25.7" fill="none" stroke="#ff26e2" stroke-width="0.95"/>
<circle cx="536.6" cy="336.7" r="23.8" fill="none" stroke="#4d7fc4" stroke-width="0.8"/>
<path d="M522.8 318.0L507.4 322.8L506.6 324.8L513.5 339.3Z" fill="#c83434"/>
<circle cx="536.6" cy="336.7" r="23.2" fill="#c83434"/>
<circle cx="536.6" cy="336.7" r="12.1" fill="#001023" stroke="#e3b72e" stroke-width="1.7"/>
<path d="M533.7 320.7L537.7 317.6V332.1M533.9 332.1H541.4" fill="none" stroke="#d4d4d4" stroke-width="1.9" stroke-linecap="round" stroke-linejoin="round"/>
<text x="536.6" y="342.1" font-size="5.2" fill="#f0d4d4" fill-opacity="0.62" text-anchor="middle" textLength="40" lengthAdjust="spacingAndGlyphs" font-family="Liberation Mono">Net-(J1-VBUS_A)</text>
<circle cx="536.6" cy="405.1" r="25.7" fill="none" stroke="#ff26e2" stroke-width="0.95"/>
<circle cx="536.6" cy="405.1" r="23.8" fill="none" stroke="#4d7fc4" stroke-width="0.8"/>
<path d="M530.4 382.7L512.8 380.1L511.2 381.7L514.1 399.3Z" fill="#c83434"/>
<circle cx="536.6" cy="405.1" r="23.2" fill="#c83434"/>
<circle cx="536.6" cy="405.1" r="12.1" fill="#001023" stroke="#e3b72e" stroke-width="1.7"/>
<path d="M533.7 389.1L537.7 386.0V400.5M533.9 400.5H541.4" fill="none" stroke="#d4d4d4" stroke-width="1.9" stroke-linecap="round" stroke-linejoin="round"/>
<text x="536.6" y="410.5" font-size="5.2" fill="#f0d4d4" fill-opacity="0.62" text-anchor="middle" textLength="40" lengthAdjust="spacingAndGlyphs" font-family="Liberation Mono">Net-(J1-SBU2)</text>
<circle cx="536.7" cy="471.2" r="25.7" fill="none" stroke="#ff26e2" stroke-width="0.95"/>
<circle cx="536.7" cy="471.2" r="23.8" fill="none" stroke="#4d7fc4" stroke-width="0.8"/>
<path d="M523.5 452.1L507.3 456.0L506.3 458.0L513.6 473.1Z" fill="#c83434"/>
<circle cx="536.7" cy="471.2" r="23.2" fill="#c83434"/>
<circle cx="536.7" cy="471.2" r="12.1" fill="#001023" stroke="#e3b72e" stroke-width="1.7"/>
<path d="M533.8 455.2L537.8 452.1V466.6M534.0 466.6H541.5" fill="none" stroke="#d4d4d4" stroke-width="1.9" stroke-linecap="round" stroke-linejoin="round"/>
<text x="536.7" y="476.6" font-size="5.2" fill="#f0d4d4" fill-opacity="0.62" text-anchor="middle" textLength="40" lengthAdjust="spacingAndGlyphs" font-family="Liberation Mono">Net-(J1-CC1)</text>
<circle cx="536.7" cy="539.8" r="25.7" fill="none" stroke="#ff26e2" stroke-width="0.95"/>
<circle cx="536.7" cy="539.8" r="23.8" fill="none" stroke="#4d7fc4" stroke-width="0.8"/>
<path d="M519.6 524.2L507.3 532.2L506.9 534.4L514.6 546.8Z" fill="#c83434"/>
<circle cx="536.7" cy="539.8" r="23.2" fill="#c83434"/>
<circle cx="536.7" cy="539.8" r="12.1" fill="#001023" stroke="#e3b72e" stroke-width="1.7"/>
<path d="M533.8 523.8L537.8 520.7V535.2M534.0 535.2H541.5" fill="none" stroke="#d4d4d4" stroke-width="1.9" stroke-linecap="round" stroke-linejoin="round"/>
<text x="536.7" y="545.2" font-size="5.2" fill="#f0d4d4" fill-opacity="0.62" text-anchor="middle" textLength="40" lengthAdjust="spacingAndGlyphs" font-family="Liberation Mono">Net-(J1-DP2)</text>
<circle cx="536.7" cy="613.8" r="25.7" fill="none" stroke="#ff26e2" stroke-width="0.95"/>
<circle cx="536.7" cy="613.8" r="23.8" fill="none" stroke="#4d7fc4" stroke-width="0.8"/>
<path d="M531.5 591.2L515.0 588.9L513.4 590.3L514.5 607.0Z" fill="#c83434"/>
<circle cx="536.7" cy="613.8" r="23.2" fill="#c83434"/>
<circle cx="536.7" cy="613.8" r="12.1" fill="#001023" stroke="#e3b72e" stroke-width="1.7"/>
<path d="M533.8 597.8L537.8 594.7V609.2M534.0 609.2H541.5" fill="none" stroke="#d4d4d4" stroke-width="1.9" stroke-linecap="round" stroke-linejoin="round"/>
<text x="536.7" y="619.2" font-size="5.2" fill="#f0d4d4" fill-opacity="0.62" text-anchor="middle" textLength="40" lengthAdjust="spacingAndGlyphs" font-family="Liberation Mono">Net-(J1-DN1)</text>
<g fill="#bebebe" font-family="Liberation Mono" font-size="16.8" stroke="#bebebe" stroke-width="0.3">
<text x="259.0" y="236.0" textLength="172.0" lengthAdjust="spacingAndGlyphs">TestPoint 2340901-1</text>
<text x="259.0" y="303.8" textLength="71.5" lengthAdjust="spacingAndGlyphs">TestPoint</text>
<text x="259.1" y="371.6" textLength="71.5" lengthAdjust="spacingAndGlyphs">TestPoint</text>
<text x="259.1" y="440.7" textLength="71.5" lengthAdjust="spacingAndGlyphs">TestPoint</text>
<text x="259.1" y="509.0" textLength="71.5" lengthAdjust="spacingAndGlyphs">TestPoint</text>
<text x="261.5" y="578.1" textLength="71.5" lengthAdjust="spacingAndGlyphs">TestPoint</text>
<text x="261.9" y="649.4" textLength="71.5" lengthAdjust="spacingAndGlyphs">TestPoint</text>
<text x="501.2" y="304.1" textLength="71.5" lengthAdjust="spacingAndGlyphs">TestPoint</text>
<text x="501.2" y="375.3" textLength="71.5" lengthAdjust="spacingAndGlyphs">TestPoint</text>
<text x="501.2" y="443.7" textLength="71.5" lengthAdjust="spacingAndGlyphs">TestPoint</text>
<text x="501.3" y="509.8" textLength="71.5" lengthAdjust="spacingAndGlyphs">TestPoint</text>
<text x="501.3" y="578.4" textLength="71.5" lengthAdjust="spacingAndGlyphs">TestPoint</text>
<text x="501.3" y="652.4" textLength="71.5" lengthAdjust="spacingAndGlyphs">TestPoint</text>
</g>
<text x="318.8" y="138.7" textLength="62.5" lengthAdjust="spacingAndGlyphs" font-family="Liberation Mono" font-size="14.8" fill="#b4b4b4" stroke="#b4b4b4" stroke-width="0.3">PCB EDGE</text>
<path d="M62.8 210.2V278.8M32 244.8H97" stroke="#5e6a7a" stroke-width="1.6"/>
</svg>

<svg class="a" style="left:0;top:104px" width="32" height="583" viewBox="0 104 32 583">
<rect x="30.6" y="104" width="1.4" height="582" fill="#e4e4e4"/>
<g fill="#b6d8f4" stroke="#3f95e0" stroke-width="1.1">
<rect x="3.6" y="108.5" width="25.8" height="25.2" rx="1.5"/>
<rect x="3.6" y="136.4" width="25.8" height="25.2" rx="1.5"/>
<rect x="3.6" y="247.4" width="25.8" height="25" rx="1.5"/>
<rect x="3.6" y="344.4" width="25.8" height="25" rx="1.5"/>
<rect x="3.6" y="469.5" width="25.8" height="25" rx="1.5"/>
<rect x="3.6" y="621.5" width="25.8" height="25.2" rx="1.5"/>
</g>
<g stroke="#a6a6a6" stroke-width="1.2"><path d="M5.2 304.6H27.7M5.2 339.1H27.7M5.2 401.5H27.7M5.2 464.1H27.7M5.2 526.4H27.7M5.2 616.4H27.7"/></g>
<!-- grid -->
<g fill="#5a5a5a">
<circle cx="8.5" cy="113.3" r="1.3"/><circle cx="13.8" cy="113.3" r="1.3"/><circle cx="19" cy="113.3" r="1.3"/><circle cx="24.4" cy="113.3" r="1.3"/>
<circle cx="8.5" cy="118.5" r="1.3"/><circle cx="13.8" cy="118.5" r="1.3"/><circle cx="19" cy="118.5" r="1.3"/><circle cx="24.4" cy="118.5" r="1.3"/>
<circle cx="8.5" cy="123.8" r="1.3"/><circle cx="13.8" cy="123.8" r="1.3"/><circle cx="19" cy="123.8" r="1.3"/><circle cx="24.4" cy="123.8" r="1.3"/>
<circle cx="8.5" cy="129" r="1.3"/><circle cx="13.8" cy="129" r="1.3"/><circle cx="19" cy="129" r="1.3"/><circle cx="24.4" cy="129" r="1.3"/>
<circle cx="8.5" cy="141.2" r="1.3"/><circle cx="13.8" cy="141.2" r="1.3"/><circle cx="19" cy="141.2" r="1.3"/>
<circle cx="8.5" cy="146.4" r="1.3"/><circle cx="13.8" cy="146.4" r="1.3"/><circle cx="8.5" cy="151.6" r="1.3"/>
</g>
<path d="M6.3 159L26.7 138.8" stroke="#5a5a5a" stroke-width="1.2"/>
<path d="M20 148.3h1M23 148.3h1M17 151.3h1M20 151.3h1M23 151.3h1M14 154.3h1M17 154.3h1M20 154.3h1M23 154.3h1M12 157.3h1M14.5 157.3h1M17 157.3h1M20 157.3h1M23 157.3h1M25.5 157.3h1M25.5 154.3h1M25.5 151.3h1" stroke="#6a6a6a" stroke-width="1.1"/>
<!-- polar -->
<g fill="none" stroke="#5a5a5a" stroke-width="1.3">
<path d="M7.4 168.5V185.6H26M5.6 170.5L7.4 167.5L9.2 170.5"/>
<path d="M7.6 185.4L24.5 169" stroke-width="1"/>
<path d="M11.5 173V178.5M11.5 174.7Q12.5 173 14.3 173.2" stroke-width="1.4"/>
<path d="M19.5 181.5Q19.5 177.5 21.5 177.5Q22.5 177.5 22.3 179.5Q21.8 183.5 19.8 183.5Q18.8 183.5 19.5 181.5ZM19.2 180.5H22.4" stroke-width="1"/>
</g>
<circle cx="24.5" cy="169" r="1.9" fill="#d02040"/>
<!-- in / mil / mm -->
<g fill="none" stroke="#555" stroke-width="1.4">
<path d="M12.8 200.6V205.2M12.8 198V198.6M15.5 205.2V200.8M15.5 202.3Q16.3 200.6 17.8 200.6Q20 200.6 20 202.6V205.2"/>
<path d="M8.6 209H24.2M10.4 207.2L8.2 209L10.4 210.8M22.4 207.2L24.6 209L22.4 210.8"/>
<path d="M9.3 232.4V227.7M9.3 229.2Q10 227.6 11.4 227.6Q12.8 227.6 12.8 229.5V232.4M12.8 229.5Q12.8 227.6 14.5 227.6Q16.2 227.6 16.2 229.5V232.4M18.8 227.7V232.4M18.8 225.7V226.3M22.2 225.5V232.4"/>
<path d="M8.6 237H24.2M10.4 235.2L8.2 237L10.4 238.8M22.4 235.2L24.6 237L22.4 238.8"/>
<path d="M7.8 256.3V251.7M7.8 253.2Q8.5 251.6 10 251.6Q11.6 251.6 11.6 253.5V256.3M11.6 253.5Q11.6 251.6 13.3 251.6Q15 251.6 15 253.5V256.3M17.2 256.3V251.7M17.2 253.2Q17.9 251.6 19.4 251.6Q21 251.6 21 253.5V256.3M21 253.5Q21 251.6 22.7 251.6Q24.4 251.6 24.4 253.5V256.3"/>
<path d="M8.6 264.8H24.2M10.4 263L8.2 264.8L10.4 266.6M22.4 263L24.6 264.8L22.4 266.6"/>
</g>
<!-- cursor -->
<path d="M6.5 288.2H26.7M16.5 277.6V297.2" stroke="#bdbdbd" stroke-width="0.9"/>
<path d="M12.3 288.2H20.7M16.5 284V292.4" stroke="#1b80d0" stroke-width="1.9"/>
<path d="M16.6 288.6L17.2 297L19 295.2L20.7 298.3L22 297.6L20.4 294.6H22.9Z" fill="#4a4a4a"/>
<!-- angle -->
<g fill="none" stroke="#555" stroke-width="1.4"><path d="M9.6 313V331M7 329.3H25.9M9.6 329.3L22.9 316.2"/><path d="M9.6 322.6H16.3V329.3" stroke-width="0.9"/></g>
<!-- ratsnest -->
<g stroke="#5a5a5a" stroke-width="1"><path d="M10 351.7L22.3 362.3M21.2 353L10.9 363M10 351.7L26.5 354.2"/></g>
<g fill="#fff" stroke="#777" stroke-width="0.9"><circle cx="10" cy="351.7" r="2.1"/><circle cx="21.2" cy="353" r="2.1"/><circle cx="10.9" cy="363" r="2.1"/><circle cx="22.3" cy="362.3" r="2.1"/></g>
<!-- curved ratsnest -->
<g fill="none" stroke="#5a5a5a" stroke-width="1"><path d="M6.3 394.4L26.7 374.6M17.2 376.8L8.2 385.7M24.2 383Q24 391 14.1 392.8"/></g>
<g fill="#fff" stroke="#777" stroke-width="0.9"><circle cx="17.2" cy="376.8" r="1.8"/><circle cx="8.2" cy="385.7" r="1.8"/><circle cx="24.2" cy="383" r="1.8"/><circle cx="14.1" cy="392.8" r="1.8"/></g>
<!-- track high contrast -->
<g fill="none" stroke-width="1.6" stroke-linejoin="round">
<path d="M10.6 409.7L14.2 413H19.5L26.4 420.3M17.5 419L26.4 427.2" stroke="#c9203c"/>
<path d="M6.1 410.5L12.6 417M6.1 420.3L10.6 424.8H18.3L22.8 429.3" stroke="#4a4a4a"/>
</g>
<circle cx="14.6" cy="419.5" r="2.3" fill="#fff" stroke="#f39a14" stroke-width="1.6"/>
<!-- tracks outline -->
<g fill="none" stroke-width="1.5">
<path d="M6 439.9H14.2Q19.1 439.9 19.1 444.7V457.4M18.3 437.4L23.6 442.3V457.4" stroke="#bdbdbd"/>
<path d="M13.5 446.4H26.4" stroke="#a6cfec" stroke-width="2.2"/>
<path d="M11.4 448.4V457.4" stroke="#e8a4b4" stroke-width="2.2"/>
</g>
<circle cx="11.4" cy="446.4" r="2.4" fill="#fff" stroke="#f4c070" stroke-width="1.5"/>
<!-- zone fill -->
<path d="M8.2 482H13.8V473.2H24.8V490.4H8.2Z" fill="#3aaae4" stroke="#1f7ec4" stroke-width="0.6"/>
<circle cx="21.5" cy="480.8" r="2.8" fill="#cfe6f7"/><path d="M20 480.8H24.8" stroke="#4a4a4a" stroke-width="1.2"/><circle cx="20.3" cy="480.8" r="1.2" fill="#4a4a4a"/>
<!-- zone outline -->
<path d="M8.2 517.8V509.5H13.8V501.3H24.6V517.8Z" fill="none" stroke="#2a8ad6" stroke-width="1.2" stroke-dasharray="1.6 1.4"/>
<path d="M19.5 508.7H24" stroke="#4a4a4a" stroke-width="1.2"/><circle cx="20" cy="508.7" r="1.3" fill="#4a4a4a"/>
<!-- footprint text -->
<path d="M6.6 537H26V551H6.6V546.5A2.3 2.3 0 0 0 6.6 542Z" fill="none" stroke="#555" stroke-width="0.9"/>
<g fill="#1a82cf"><rect x="9.3" y="534.3" width="3.6" height="5"/><rect x="14.8" y="534.3" width="3.6" height="5"/><rect x="20.3" y="534.3" width="3.6" height="5"/></g>
<g fill="#fff" stroke="#1a82cf" stroke-width="0.9"><rect x="9.3" y="549" width="3.6" height="5.2"/><rect x="14.8" y="549" width="3.6" height="5.2"/><rect x="20.3" y="549" width="3.6" height="5.2"/></g>
<path d="M6.3 554.4L26.7 534" stroke="#444" stroke-width="1"/>
<!-- via -->
<defs>
<clipPath id="ulv"><path d="M0 561L27 561L5 583L0 583Z"/></clipPath>
<clipPath id="lrv"><path d="M27 561L27 583L5 583Z"/></clipPath>
<clipPath id="ulp"><path d="M0 589L27 589L5 611L0 611Z"/></clipPath>
<clipPath id="lrp"><path d="M27 589L27 611L5 611Z"/></clipPath>
</defs>
<g clip-path="url(#ulv)"><circle cx="16" cy="571.6" r="5.8" fill="none" stroke="#f39a14" stroke-width="5.6"/></g>
<g clip-path="url(#lrv)" fill="none" stroke="#c4c4c4" stroke-width="0.9"><circle cx="16" cy="571.6" r="8.4"/><circle cx="16" cy="571.6" r="3.2"/></g>
<path d="M6.3 581.5L26.7 561" stroke="#444" stroke-width="1"/>
<!-- pad -->
<g clip-path="url(#ulp)"><path d="M16.3 590.8V609" stroke="#c9203c" stroke-width="2.8" stroke-linecap="round"/><path d="M7 599.7H26.2" stroke="#1a82cf" stroke-width="2.8" stroke-linecap="round"/></g>
<g clip-path="url(#lrp)" fill="none" stroke-width="1"><path d="M15.2 590V609.6M17.4 590V609.6" stroke="#d84a64"/><path d="M6 598.5H26.5M6 600.9H26.5" stroke="#4a9ad8"/></g>
<path d="M6.3 609.6L26.7 589.8" stroke="#444" stroke-width="1"/>
<!-- layers -->
<path d="M16.3 631.5L24.2 637.5L16.3 643.5L8.4 637.5Z" fill="#f39a14"/>
<path d="M16.3 629L24.2 635L16.3 641L8.4 635Z" fill="#555"/>
<path d="M16.3 624.8L24.6 631.3L16.3 637.8L8 631.3Z" fill="#1f86d3"/>
<!-- wrench -->
<path d="M18.8 659.4L7.6 670.8" stroke="#4a4a4a" stroke-width="1.5" stroke-linecap="round"/>
<path d="M23.4 654.6L19.6 658.4" stroke="#555" stroke-width="4.2" stroke-linecap="round"/>
<path d="M13.2 659.2L23.2 669.1" stroke="#1f82cc" stroke-width="3.6" stroke-linecap="round"/>
<circle cx="11.2" cy="656.8" r="4.3" fill="#1f82cc"/>
<path d="M10.7 656.3L6.8 652.4" stroke="#f0f0f0" stroke-width="3" stroke-linecap="round"/>
<circle cx="23" cy="668.9" r="0.8" fill="#f0f0f0"/>
</svg>

<svg class="a" style="left:798px;top:104px" width="34" height="583" viewBox="798 104 34 583">
<rect x="798" y="104" width="30.6" height="582.2" fill="#f0f0f0"/>
<rect x="828.6" y="104" width="3.4" height="582.2" fill="#e3e3e3"/>
<rect x="800.6" y="108.5" width="25.6" height="25.2" rx="1.5" fill="#b6d8f4" stroke="#3f95e0" stroke-width="1.1"/>
<g stroke="#a6a6a6" stroke-width="1.2"><path d="M802 166H825M802 339H825M802 678.9H825"/></g>
<!-- select arrow -->
<path d="M809 114.3V127L811.6 124.4L814.2 129.6L816.4 128.5L813.9 123.4H817.5Z" fill="#505050"/>
<!-- local ratsnest X -->
<path d="M804.7 138.8L823.7 157.8M804.7 157.8L823.7 138.8" stroke="#5e5e5e" stroke-width="1.1"/>
<circle cx="814" cy="148.6" r="2" fill="#fff" stroke="#777" stroke-width="0.9"/>
<!-- footprint -->
<path d="M803.6 175.7H823.5V190.5H803.6V185.5A2.4 2.4 0 0 0 803.6 180.7Z" fill="none" stroke="#555" stroke-width="0.9"/>
<g fill="#1a82cf"><rect x="806" y="173" width="3.6" height="6"/><rect x="812" y="173" width="3.6" height="6"/><rect x="818" y="173" width="3.6" height="6"/><rect x="806" y="188.3" width="3.6" height="5.5"/><rect x="812" y="188.3" width="3.6" height="5.5"/><rect x="818" y="188.3" width="3.6" height="5.5"/></g>
<!-- route -->
<path d="M804.5 220.4L809.8 211.7H818.4L822.6 202.6" fill="none" stroke="#1f86d3" stroke-width="1.6" stroke-linecap="round" stroke-linejoin="round"/>
<path d="M826.4 218.8V224.2H820.6Z" fill="#111"/>
<!-- tune -->
<path d="M803.8 240.2Q806 239 806.5 236Q807.5 233.5 809 236V241Q810 244.5 812 241V236Q813 233.5 814.5 236V241Q815.5 244.5 817.5 241V236Q818.5 233.5 820 236Q820.5 239.5 823 239.5" fill="none" stroke="#1f86d3" stroke-width="1.6" stroke-linecap="round"/>
<path d="M826.4 246.5V252H820.6Z" fill="#111"/>
<!-- via -->
<circle cx="813.4" cy="267.3" r="4.4" fill="none" stroke="#f39a14" stroke-width="3.2"/>
<!-- zone -->
<path d="M804.9 295H810.1V286.3H822.1V303.1H804.9Z" fill="#1f82cc"/>
<circle cx="818.8" cy="293.5" r="2.8" fill="#f0f0f0"/><path d="M817.5 293.5H822.1" stroke="#4a4a4a" stroke-width="1.1"/><circle cx="818" cy="293.5" r="1.2" fill="#4a4a4a"/>
<!-- rule area -->
<defs><pattern id="hat" width="3.6" height="3.6" patternUnits="userSpaceOnUse" patternTransform="rotate(45)"><rect width="3.6" height="3.6" fill="#f4f4f4"/><rect width="1.8" height="3.6" fill="#4a4a4a"/></pattern></defs>
<path d="M805.3 322.2H810.3V314.4H821.8V330.2H805.3Z" fill="url(#hat)" stroke="#4a4a4a" stroke-width="1"/>
<!-- line, arc, rect, circle, poly -->
<g fill="none" stroke="#555" stroke-width="1.7" stroke-linecap="round">
<path d="M805.3 365.1L821.4 349.3"/>
<path d="M805.3 392.8A16 16 0 0 1 821.4 377"/>
</g>
<rect x="805.3" y="405.3" width="16.2" height="15.5" fill="#c2c2c2" stroke="#555" stroke-width="1.5"/>
<circle cx="813.4" cy="440.1" r="7.6" fill="#c2c2c2" stroke="#555" stroke-width="1.5"/>
<path d="M805.6 460.2L821.5 462.4L820.5 472.7L806.3 476.5L810.7 469.5Z" fill="#c2c2c2" stroke="#555" stroke-width="1.4" stroke-linejoin="round"/>
<!-- bezier -->
<path d="M818.5 487.5Q818 495 813.4 495Q808.5 495.5 808 505" fill="none" stroke="#555" stroke-width="1.3"/>
<path d="M805 495H821.8" stroke="#1f86d3" stroke-width="1.1"/>
<rect x="803.5" y="493.6" width="2.8" height="2.8" fill="#1f86d3"/><rect x="820.6" y="493.6" width="2.8" height="2.8" fill="#1f86d3"/>
<circle cx="813.4" cy="495" r="1.5" fill="#fff" stroke="#1f86d3" stroke-width="0.8"/>
<!-- image -->
<rect x="804.2" y="514.1" width="18.4" height="18.5" rx="2.8" fill="#555"/>
<path d="M806 530.2L811.8 522.3L815.2 527L817.2 525L820.5 530.2Z" fill="#fff"/>
<circle cx="816.6" cy="518.8" r="1.9" fill="#fff"/>
<!-- T -->
<path d="M806.3 544.2H820.5M813.4 544.2V559.8" stroke="#555" stroke-width="2.7"/>
<!-- textbox -->
<rect x="805.3" y="571.4" width="16" height="14.5" fill="#c2c2c2" stroke="#555" stroke-width="1.4"/>
<path d="M808 575.5H818.5M808 578.5H818.5M808 581.5H815" stroke="#666" stroke-width="0.9"/>
<!-- table -->
<rect x="803.2" y="596.3" width="20.3" height="20.2" fill="#fff" stroke="#5a5a5a" stroke-width="1.1"/>
<rect x="803.2" y="596.3" width="20.3" height="5" fill="#bdbdbd"/>
<path d="M803.2 601.3H823.5M803.2 606.3H823.5M803.2 611.3H823.5M809.9 596.3V616.5M816.6 596.3V616.5" stroke="#5a5a5a" stroke-width="1"/>
<!-- dimension -->
<path d="M806 626.7H822.8M813.4 641.7H822.8" stroke="#9a9a9a" stroke-width="1.1"/>
<path d="M821 628V640.5M819.5 629.5L821 628L822.5 629.5M819.5 639L821 640.5L822.5 639" fill="none" stroke="#555" stroke-width="0.9"/>
<circle cx="806" cy="626.7" r="2.3" fill="#1f86d3"/><circle cx="813.4" cy="641.7" r="2.3" fill="#1f86d3"/>
<path d="M826.4 641.4V646.8H820.6Z" fill="#111"/>
<!-- delete -->
<path d="M806.3 653V666.5L809.5 663.5L812.5 669L815.2 667.5L812.5 662H816.8Z" fill="#5a5a5a"/>
<circle cx="817.7" cy="666.6" r="6" fill="#c9203c"/>
<path d="M815.3 664.2L820.1 669M820.1 664.2L815.3 669" stroke="#fff" stroke-width="1.6"/>
</svg>

<div class="a" style="left:832px;top:104.1px;width:190px;height:17.5px;background:#bbbbbb"></div>
<svg class="a" style="left:834.70px;top:0;overflow:visible" width="1" height="1"><text x="0" y="117.16" font-size="12" fill="#262626" textLength="22.00" lengthAdjust="spacingAndGlyphs" style="white-space:pre">外観</text></svg>
<div class="a" style="left:876px;top:128.8px;width:53px;height:17.2px;background:#f0f0f0;border:1px solid #e6e6e6;border-bottom:none"></div>
<div class="a" style="left:929px;top:128.8px;width:40px;height:17.2px;background:#f0f0f0;border:1px solid #e6e6e6;border-bottom:none"></div>
<div class="a" style="left:832.8px;top:127px;width:43.2px;height:19.5px;background:#f8f8f8;border:1px solid #ececec;border-bottom:none"></div>
<svg class="a" style="left:838.50px;top:0;overflow:visible" width="1" height="1"><text x="0" y="139.66" font-size="12" fill="#1a1a1a" textLength="32.50" lengthAdjust="spacingAndGlyphs" style="white-space:pre">レイヤー</text></svg>
<svg class="a" style="left:881.00px;top:0;overflow:visible" width="1" height="1"><text x="0" y="141.16" font-size="12" fill="#1a1a1a" textLength="45.00" lengthAdjust="spacingAndGlyphs" style="white-space:pre">オブジェクト</text></svg>
<svg class="a" style="left:935.00px;top:0;overflow:visible" width="1" height="1"><text x="0" y="141.16" font-size="12" fill="#1a1a1a" textLength="22.50" lengthAdjust="spacingAndGlyphs" style="white-space:pre">ネット</text></svg>
<div class="a" style="left:832.3px;top:146.2px;width:187.7px;height:344.6px;background:#f6f6f6"></div>
<div class="a" style="left:835px;top:146.5px;width:184px;height:323px;background:#f0f0f0;border:1px solid #f8f8f8"></div>
<div class="a" style="left:1004.5px;top:147px;width:1px;height:322.5px;background:#fafafa"></div>
<div class="a" style="left:1011.2px;top:162px;width:2px;height:243px;background:#8a8a8a;border-radius:1px"></div>
<div class="a" style="left:835.2px;top:241px;width:168.8px;height:15.3px;background:#dcdcdc"></div>
<svg class="a" style="left:838px;top:245px" width="6" height="9" viewBox="0 0 6 9"><path d="M0.5 0.5L5.5 4.5L0.5 8.5Z" fill="#3a3afa"/></svg>
<div class="a" style="left:835px;top:147px;width:170px;height:322.3px;overflow:hidden">
<svg class="a" style="left:0;top:0" width="170" height="323" viewBox="835 147 170 323">
<defs><pattern id="m1" width="4" height="4" patternUnits="userSpaceOnUse"><rect width="4" height="4" fill="#4b2a6e"/><rect width="2" height="2" fill="#6a3a8e"/><rect x="2" y="2" width="2" height="2" fill="#6a3a8e"/></pattern>
<pattern id="m2" width="4" height="4" patternUnits="userSpaceOnUse"><rect width="4" height="4" fill="#0e5e5a"/><rect width="2" height="2" fill="#1f7a76"/><rect x="2" y="2" width="2" height="2" fill="#1f7a76"/></pattern></defs>
<rect x="849" y="151.2" width="12" height="9.4" fill="#c83434"/>
<circle cx="873.1" cy="155.9" r="7" fill="#4e4e4e"/>
<path d="M867.5 155.9Q873.1 149.7 878.7 155.9Q873.1 162.1 867.5 155.9Z" fill="#fff"/>
<circle cx="873.1" cy="155.9" r="1.9" fill="none" stroke="#888" stroke-width="1"/>
<rect x="849" y="166.8" width="12" height="9.4" fill="#4d7fc4"/>
<circle cx="873.1" cy="171.5" r="7" fill="#4e4e4e"/>
<path d="M867.5 171.5Q873.1 165.3 878.7 171.5Q873.1 177.7 867.5 171.5Z" fill="#fff"/>
<circle cx="873.1" cy="171.5" r="1.9" fill="none" stroke="#888" stroke-width="1"/>
<rect x="849" y="182.3" width="12" height="9.4" fill="#840084"/>
<circle cx="873.1" cy="187.0" r="7" fill="#4e4e4e"/>
<path d="M867.5 187.0Q873.1 180.8 878.7 187.0Q873.1 193.2 867.5 187.0Z" fill="#fff"/>
<circle cx="873.1" cy="187.0" r="1.9" fill="none" stroke="#888" stroke-width="1"/>
<rect x="849" y="197.9" width="12" height="9.4" fill="#000084"/>
<circle cx="873.1" cy="202.6" r="7" fill="#4e4e4e"/>
<path d="M867.5 202.6Q873.1 196.4 878.7 202.6Q873.1 208.8 867.5 202.6Z" fill="#fff"/>
<circle cx="873.1" cy="202.6" r="1.9" fill="none" stroke="#888" stroke-width="1"/>
<rect x="849" y="213.4" width="12" height="9.4" fill="#a58f8a"/>
<circle cx="873.1" cy="218.1" r="7" fill="#4e4e4e"/>
<path d="M867.5 218.1Q873.1 211.9 878.7 218.1Q873.1 224.3 867.5 218.1Z" fill="#fff"/>
<circle cx="873.1" cy="218.1" r="1.9" fill="none" stroke="#888" stroke-width="1"/>
<rect x="849" y="229.0" width="12" height="9.4" fill="#00b8b8"/>
<circle cx="873.1" cy="233.7" r="7" fill="#4e4e4e"/>
<path d="M867.5 233.7Q873.1 227.5 878.7 233.7Q873.1 239.8 867.5 233.7Z" fill="#fff"/>
<circle cx="873.1" cy="233.7" r="1.9" fill="none" stroke="#888" stroke-width="1"/>
<rect x="849" y="244.5" width="12" height="9.4" fill="#f2eda1"/>
<circle cx="873.1" cy="249.2" r="7" fill="#4e4e4e"/>
<path d="M867.5 249.2Q873.1 243.0 878.7 249.2Q873.1 255.4 867.5 249.2Z" fill="#fff"/>
<circle cx="873.1" cy="249.2" r="1.9" fill="none" stroke="#888" stroke-width="1"/>
<rect x="849" y="260.1" width="12" height="9.4" fill="#ecb5a8"/>
<circle cx="873.1" cy="264.8" r="7" fill="#4e4e4e"/>
<path d="M867.5 264.8Q873.1 258.6 878.7 264.8Q873.1 270.9 867.5 264.8Z" fill="#fff"/>
<circle cx="873.1" cy="264.8" r="1.9" fill="none" stroke="#888" stroke-width="1"/>
<rect x="849" y="275.6" width="12" height="9.4" fill="url(#m1)"/>
<circle cx="873.1" cy="280.3" r="7" fill="#4e4e4e"/>
<path d="M867.5 280.3Q873.1 274.1 878.7 280.3Q873.1 286.5 867.5 280.3Z" fill="#fff"/>
<circle cx="873.1" cy="280.3" r="1.9" fill="none" stroke="#888" stroke-width="1"/>
<rect x="849" y="291.2" width="12" height="9.4" fill="url(#m2)"/>
<circle cx="873.1" cy="295.9" r="7" fill="#4e4e4e"/>
<path d="M867.5 295.9Q873.1 289.7 878.7 295.9Q873.1 302.1 867.5 295.9Z" fill="#fff"/>
<circle cx="873.1" cy="295.9" r="1.9" fill="none" stroke="#888" stroke-width="1"/>
<rect x="849" y="306.7" width="12" height="9.4" fill="#c2c2c2"/>
<circle cx="873.1" cy="311.4" r="7" fill="#4e4e4e"/>
<path d="M867.5 311.4Q873.1 305.2 878.7 311.4Q873.1 317.6 867.5 311.4Z" fill="#fff"/>
<circle cx="873.1" cy="311.4" r="1.9" fill="none" stroke="#888" stroke-width="1"/>
<rect x="849" y="322.3" width="12" height="9.4" fill="#5b90dc"/>
<circle cx="873.1" cy="327.0" r="7" fill="#4e4e4e"/>
<path d="M867.5 327.0Q873.1 320.8 878.7 327.0Q873.1 333.2 867.5 327.0Z" fill="#fff"/>
<circle cx="873.1" cy="327.0" r="1.9" fill="none" stroke="#888" stroke-width="1"/>
<rect x="849" y="337.8" width="12" height="9.4" fill="#b4dbd2"/>
<circle cx="873.1" cy="342.5" r="7" fill="#4e4e4e"/>
<path d="M867.5 342.5Q873.1 336.3 878.7 342.5Q873.1 348.7 867.5 342.5Z" fill="#fff"/>
<circle cx="873.1" cy="342.5" r="1.9" fill="none" stroke="#888" stroke-width="1"/>
<rect x="849" y="353.4" width="12" height="9.4" fill="#d6c550"/>
<circle cx="873.1" cy="358.1" r="7" fill="#4e4e4e"/>
<path d="M867.5 358.1Q873.1 351.9 878.7 358.1Q873.1 364.2 867.5 358.1Z" fill="#fff"/>
<circle cx="873.1" cy="358.1" r="1.9" fill="none" stroke="#888" stroke-width="1"/>
<rect x="849" y="368.9" width="12" height="9.4" fill="#cfd1cc"/>
<circle cx="873.1" cy="373.6" r="7" fill="#4e4e4e"/>
<path d="M867.5 373.6Q873.1 367.4 878.7 373.6Q873.1 379.8 867.5 373.6Z" fill="#fff"/>
<circle cx="873.1" cy="373.6" r="1.9" fill="none" stroke="#888" stroke-width="1"/>
<rect x="849" y="384.4" width="12" height="9.4" fill="#ff26e2"/>
<circle cx="873.1" cy="389.1" r="7" fill="#4e4e4e"/>
<path d="M867.5 389.1Q873.1 382.9 878.7 389.1Q873.1 395.3 867.5 389.1Z" fill="#fff"/>
<circle cx="873.1" cy="389.1" r="1.9" fill="none" stroke="#888" stroke-width="1"/>
<rect x="849" y="400.0" width="12" height="9.4" fill="#ff26e2"/>
<circle cx="873.1" cy="404.7" r="7" fill="#4e4e4e"/>
<path d="M867.5 404.7Q873.1 398.5 878.7 404.7Q873.1 410.9 867.5 404.7Z" fill="#fff"/>
<circle cx="873.1" cy="404.7" r="1.9" fill="none" stroke="#888" stroke-width="1"/>
<rect x="849" y="415.6" width="12" height="9.4" fill="#26e9ff"/>
<circle cx="873.1" cy="420.2" r="7" fill="#4e4e4e"/>
<path d="M867.5 420.2Q873.1 414.1 878.7 420.2Q873.1 426.4 867.5 420.2Z" fill="#fff"/>
<circle cx="873.1" cy="420.2" r="1.9" fill="none" stroke="#888" stroke-width="1"/>
<rect x="849" y="431.1" width="12" height="9.4" fill="#afafaf"/>
<circle cx="873.1" cy="435.8" r="7" fill="#4e4e4e"/>
<path d="M867.5 435.8Q873.1 429.6 878.7 435.8Q873.1 442.0 867.5 435.8Z" fill="#fff"/>
<circle cx="873.1" cy="435.8" r="1.9" fill="none" stroke="#888" stroke-width="1"/>
<rect x="849" y="446.7" width="12" height="9.4" fill="#5a5e86"/>
<circle cx="873.1" cy="451.4" r="7" fill="#4e4e4e"/>
<path d="M867.5 451.4Q873.1 445.2 878.7 451.4Q873.1 457.6 867.5 451.4Z" fill="#fff"/>
<circle cx="873.1" cy="451.4" r="1.9" fill="none" stroke="#888" stroke-width="1"/>
<rect x="849" y="462.2" width="12" height="9.4" fill="#c2c2c2"/>
<circle cx="873.1" cy="466.9" r="7" fill="#4e4e4e"/>
<path d="M867.5 466.9Q873.1 460.7 878.7 466.9Q873.1 473.1 867.5 466.9Z" fill="#fff"/>
<circle cx="873.1" cy="466.9" r="1.9" fill="none" stroke="#888" stroke-width="1"/>
</svg>
<svg class="a" style="left:49.80px;top:0;overflow:visible" width="1" height="1"><text x="0" y="12.79" font-size="10.5" fill="#1e1e1e" textLength="15.70" lengthAdjust="spacingAndGlyphs" style="white-space:pre">F.Cu</text></svg>
<svg class="a" style="left:49.80px;top:0;overflow:visible" width="1" height="1"><text x="0" y="28.39" font-size="10.5" fill="#1e1e1e" textLength="18.20" lengthAdjust="spacingAndGlyphs" style="white-space:pre">B.Cu</text></svg>
<svg class="a" style="left:49.80px;top:0;overflow:visible" width="1" height="1"><text x="0" y="43.89" font-size="10.5" fill="#1e1e1e" textLength="42.00" lengthAdjust="spacingAndGlyphs" style="white-space:pre">F.Adhesive</text></svg>
<svg class="a" style="left:49.80px;top:0;overflow:visible" width="1" height="1"><text x="0" y="59.49" font-size="10.5" fill="#1e1e1e" textLength="44.30" lengthAdjust="spacingAndGlyphs" style="white-space:pre">B.Adhesive</text></svg>
<svg class="a" style="left:49.80px;top:0;overflow:visible" width="1" height="1"><text x="0" y="74.99" font-size="10.5" fill="#1e1e1e" textLength="27.00" lengthAdjust="spacingAndGlyphs" style="white-space:pre">F.Paste</text></svg>
<svg class="a" style="left:49.80px;top:0;overflow:visible" width="1" height="1"><text x="0" y="90.59" font-size="10.5" fill="#1e1e1e" textLength="29.00" lengthAdjust="spacingAndGlyphs" style="white-space:pre">B.Paste</text></svg>
<svg class="a" style="left:49.80px;top:0;overflow:visible" width="1" height="1"><text x="0" y="106.09" font-size="10.5" fill="#1e1e1e" textLength="46.30" lengthAdjust="spacingAndGlyphs" style="white-space:pre">F.Silkscreen</text></svg>
<svg class="a" style="left:49.80px;top:0;overflow:visible" width="1" height="1"><text x="0" y="121.69" font-size="10.5" fill="#1e1e1e" textLength="49.00" lengthAdjust="spacingAndGlyphs" style="white-space:pre">B.Silkscreen</text></svg>
<svg class="a" style="left:49.80px;top:0;overflow:visible" width="1" height="1"><text x="0" y="137.19" font-size="10.5" fill="#1e1e1e" textLength="27.00" lengthAdjust="spacingAndGlyphs" style="white-space:pre">F.Mask</text></svg>
<svg class="a" style="left:49.80px;top:0;overflow:visible" width="1" height="1"><text x="0" y="152.79" font-size="10.5" fill="#1e1e1e" textLength="29.00" lengthAdjust="spacingAndGlyphs" style="white-space:pre">B.Mask</text></svg>
<svg class="a" style="left:49.80px;top:0;overflow:visible" width="1" height="1"><text x="0" y="168.29" font-size="10.5" fill="#1e1e1e" textLength="59.60" lengthAdjust="spacingAndGlyphs" style="white-space:pre">User.Drawings</text></svg>
<svg class="a" style="left:49.80px;top:0;overflow:visible" width="1" height="1"><text x="0" y="183.89" font-size="10.5" fill="#1e1e1e" textLength="65.10" lengthAdjust="spacingAndGlyphs" style="white-space:pre">User.Comments</text></svg>
<svg class="a" style="left:49.80px;top:0;overflow:visible" width="1" height="1"><text x="0" y="199.39" font-size="10.5" fill="#1e1e1e" textLength="40.00" lengthAdjust="spacingAndGlyphs" style="white-space:pre">User.Eco1</text></svg>
<svg class="a" style="left:49.80px;top:0;overflow:visible" width="1" height="1"><text x="0" y="214.99" font-size="10.5" fill="#1e1e1e" textLength="40.00" lengthAdjust="spacingAndGlyphs" style="white-space:pre">User.Eco2</text></svg>
<svg class="a" style="left:49.80px;top:0;overflow:visible" width="1" height="1"><text x="0" y="230.49" font-size="10.5" fill="#1e1e1e" textLength="41.00" lengthAdjust="spacingAndGlyphs" style="white-space:pre">Edge.Cuts</text></svg>
<svg class="a" style="left:49.80px;top:0;overflow:visible" width="1" height="1"><text x="0" y="245.99" font-size="10.5" fill="#1e1e1e" textLength="30.50" lengthAdjust="spacingAndGlyphs" style="white-space:pre">Margin</text></svg>
<svg class="a" style="left:49.80px;top:0;overflow:visible" width="1" height="1"><text x="0" y="261.59" font-size="10.5" fill="#1e1e1e" textLength="46.00" lengthAdjust="spacingAndGlyphs" style="white-space:pre">F.Courtyard</text></svg>
<svg class="a" style="left:49.80px;top:0;overflow:visible" width="1" height="1"><text x="0" y="277.09" font-size="10.5" fill="#1e1e1e" textLength="48.30" lengthAdjust="spacingAndGlyphs" style="white-space:pre">B.Courtyard</text></svg>
<svg class="a" style="left:49.80px;top:0;overflow:visible" width="1" height="1"><text x="0" y="292.69" font-size="10.5" fill="#1e1e1e" textLength="19.50" lengthAdjust="spacingAndGlyphs" style="white-space:pre">F.Fab</text></svg>
<svg class="a" style="left:49.80px;top:0;overflow:visible" width="1" height="1"><text x="0" y="308.29" font-size="10.5" fill="#1e1e1e" textLength="21.80" lengthAdjust="spacingAndGlyphs" style="white-space:pre">B.Fab</text></svg>
<svg class="a" style="left:49.80px;top:0;overflow:visible" width="1" height="1"><text x="0" y="323.79" font-size="10.5" fill="#1e1e1e" textLength="25.50" lengthAdjust="spacingAndGlyphs" style="white-space:pre">User.1</text></svg>
</div>
<div class="a" style="left:835px;top:469.5px;width:185px;height:21px;background:#f6f6f6"></div>
<div class="a" style="left:839.7px;top:473.7px;width:174.5px;height:15.1px;background:#fff"></div>
<svg class="a" style="left:844.5px;top:476.6px" width="4" height="7" viewBox="0 0 4 7"><path d="M0 0L3.6 3.3L0 6.6Z" fill="#333"/></svg>
<svg class="a" style="left:849.50px;top:0;overflow:visible" width="1" height="1"><text x="0" y="485.66" font-size="12" fill="#7a7a7a" textLength="81.00" lengthAdjust="spacingAndGlyphs" style="white-space:pre">レイヤー表示オプション</text></svg>
<svg class="a" style="left:837.70px;top:0;overflow:visible" width="1" height="1"><text x="0" y="513.23" font-size="11.5" fill="#1e1e1e" textLength="82.00" lengthAdjust="spacingAndGlyphs" style="white-space:pre">プリセット (Ctrl+Tab):</text></svg>
<div class="a" style="left:838.6px;top:517.1px;width:176.8px;height:19.5px;background:#fdfdfd;border:1px solid #e0e0e0;border-bottom-color:#bcbcbc;border-radius:3px"></div>
<svg class="a" style="left:841.50px;top:0;overflow:visible" width="1" height="1"><text x="0" y="531.16" font-size="12" fill="#1e1e1e" textLength="64.50" lengthAdjust="spacingAndGlyphs" style="white-space:pre">すべてのレイヤー</text></svg>
<svg class="a" style="left:837.70px;top:0;overflow:visible" width="1" height="1"><text x="0" y="550.23" font-size="11.5" fill="#1e1e1e" textLength="88.00" lengthAdjust="spacingAndGlyphs" style="white-space:pre">ビューポート(Shift+Tab):</text></svg>
<div class="a" style="left:838.6px;top:554.2px;width:176.8px;height:19.2px;background:#fdfdfd;border:1px solid #e0e0e0;border-bottom-color:#bcbcbc;border-radius:3px"></div>
<svg class="a" style="left:841.50px;top:0;overflow:visible" width="1" height="1"><text x="0" y="568.16" font-size="12" fill="#1e1e1e" textLength="11.80" lengthAdjust="spacingAndGlyphs" style="white-space:pre">---</text></svg>
<svg class="a" style="left:1003px;top:523px" width="10" height="42" viewBox="0 0 10 42"><path d="M1 0.5L4.5 4L8 0.5M1 37.5L4.5 41L8 37.5" fill="none" stroke="#606060" stroke-width="1"/></svg>
<div class="a" style="left:832px;top:577.7px;width:190px;height:5.1px;background:#e6e6e6"></div>
<div class="a" style="left:832px;top:582.8px;width:190px;height:17.4px;background:#bbbbbb"></div>
<svg class="a" style="left:834.50px;top:0;overflow:visible" width="1" height="1"><text x="0" y="595.66" font-size="12" fill="#262626" textLength="57.00" lengthAdjust="spacingAndGlyphs" style="white-space:pre">フィルター選択</text></svg>
<svg class="a" style="left:832px;top:600px" width="110" height="86" viewBox="832 600 110 86">
<rect x="836.1" y="606.2" width="11" height="11" rx="2" fill="#0f62bd"/>
<path d="M838.8 611.7L840.7 613.7L844.5 609.5" fill="none" stroke="#fff" stroke-width="1.1"/>
<rect x="836.1" y="619.3" width="11" height="11" rx="2" fill="#0f62bd"/>
<path d="M838.8 624.8L840.7 626.8L844.5 622.6" fill="none" stroke="#fff" stroke-width="1.1"/>
<rect x="836.1" y="632.0" width="11" height="11" rx="2" fill="#0f62bd"/>
<path d="M838.8 637.5L840.7 639.5L844.5 635.3" fill="none" stroke="#fff" stroke-width="1.1"/>
<rect x="836.1" y="644.7" width="11" height="11" rx="2" fill="#0f62bd"/>
<path d="M838.8 650.2L840.7 652.2L844.5 648.0" fill="none" stroke="#fff" stroke-width="1.1"/>
<rect x="836.1" y="658.0" width="11" height="11" rx="2" fill="#0f62bd"/>
<path d="M838.8 663.5L840.7 665.5L844.5 661.3" fill="none" stroke="#fff" stroke-width="1.1"/>
<rect x="836.1" y="671.1" width="11" height="11" rx="2" fill="#0f62bd"/>
<path d="M838.8 676.6L840.7 678.6L844.5 674.4" fill="none" stroke="#fff" stroke-width="1.1"/>
<rect x="919.7" y="606.6" width="10.2" height="10.2" rx="2" fill="#fbfbfb" stroke="#5a5a5a" stroke-width="0.9"/>
<rect x="919.3" y="619.3" width="11" height="11" rx="2" fill="#0f62bd"/>
<path d="M922.0 624.8L923.9 626.8L927.7 622.6" fill="none" stroke="#fff" stroke-width="1.1"/>
<rect x="919.3" y="632.0" width="11" height="11" rx="2" fill="#0f62bd"/>
<path d="M922.0 637.5L923.9 639.5L927.7 635.3" fill="none" stroke="#fff" stroke-width="1.1"/>
<rect x="919.3" y="644.7" width="11" height="11" rx="2" fill="#0f62bd"/>
<path d="M922.0 650.2L923.9 652.2L927.7 648.0" fill="none" stroke="#fff" stroke-width="1.1"/>
<rect x="919.3" y="658.0" width="11" height="11" rx="2" fill="#0f62bd"/>
<path d="M922.0 663.5L923.9 665.5L927.7 661.3" fill="none" stroke="#fff" stroke-width="1.1"/>
<rect x="919.3" y="671.1" width="11" height="11" rx="2" fill="#0f62bd"/>
<path d="M922.0 676.6L923.9 678.6L927.7 674.4" fill="none" stroke="#fff" stroke-width="1.1"/>
</svg>
<svg class="a" style="left:850.40px;top:0;overflow:visible" width="1" height="1"><text x="0" y="615.86" font-size="12" fill="#1e1e1e" textLength="58.60" lengthAdjust="spacingAndGlyphs" style="white-space:pre">すべてのアイテム</text></svg>
<svg class="a" style="left:850.40px;top:0;overflow:visible" width="1" height="1"><text x="0" y="628.96" font-size="12" fill="#1e1e1e" textLength="46.30" lengthAdjust="spacingAndGlyphs" style="white-space:pre">フットプリント</text></svg>
<svg class="a" style="left:850.40px;top:0;overflow:visible" width="1" height="1"><text x="0" y="641.66" font-size="12" fill="#1e1e1e" textLength="18.10" lengthAdjust="spacingAndGlyphs" style="white-space:pre">配線</text></svg>
<svg class="a" style="left:850.40px;top:0;overflow:visible" width="1" height="1"><text x="0" y="654.36" font-size="12" fill="#1e1e1e" textLength="20.00" lengthAdjust="spacingAndGlyphs" style="white-space:pre">パッド</text></svg>
<svg class="a" style="left:850.40px;top:0;overflow:visible" width="1" height="1"><text x="0" y="667.66" font-size="12" fill="#1e1e1e" textLength="19.50" lengthAdjust="spacingAndGlyphs" style="white-space:pre">ゾーン</text></svg>
<svg class="a" style="left:850.40px;top:0;overflow:visible" width="1" height="1"><text x="0" y="680.76" font-size="12" fill="#1e1e1e" textLength="18.00" lengthAdjust="spacingAndGlyphs" style="white-space:pre">寸法</text></svg>
<svg class="a" style="left:933.40px;top:0;overflow:visible" width="1" height="1"><text x="0" y="615.86" font-size="12" fill="#1e1e1e" textLength="63.00" lengthAdjust="spacingAndGlyphs" style="white-space:pre">ロックしたアイテム</text></svg>
<svg class="a" style="left:933.40px;top:0;overflow:visible" width="1" height="1"><text x="0" y="628.96" font-size="12" fill="#1e1e1e" textLength="26.30" lengthAdjust="spacingAndGlyphs" style="white-space:pre">テキスト</text></svg>
<svg class="a" style="left:933.40px;top:0;overflow:visible" width="1" height="1"><text x="0" y="641.66" font-size="12" fill="#1e1e1e" textLength="13.60" lengthAdjust="spacingAndGlyphs" style="white-space:pre">ビア</text></svg>
<svg class="a" style="left:933.40px;top:0;overflow:visible" width="1" height="1"><text x="0" y="654.36" font-size="12" fill="#1e1e1e" textLength="18.50" lengthAdjust="spacingAndGlyphs" style="white-space:pre">図形</text></svg>
<svg class="a" style="left:933.40px;top:0;overflow:visible" width="1" height="1"><text x="0" y="667.66" font-size="12" fill="#1e1e1e" textLength="42.00" lengthAdjust="spacingAndGlyphs" style="white-space:pre">ルールエリア</text></svg>
<svg class="a" style="left:933.40px;top:0;overflow:visible" width="1" height="1"><text x="0" y="680.76" font-size="12" fill="#1e1e1e" textLength="60.50" lengthAdjust="spacingAndGlyphs" style="white-space:pre">その他のアイテム</text></svg>
<div class="a" style="left:826.2px;top:235.3px;width:185.4px;height:26.6px;border:3.6px solid #e41b1b"></div>
<!-- STATUS -->
<svg class="a" style="left:1010px;top:720px" width="12" height="12" viewBox="1010 720 12 12"><g fill="#a6a6a6"><rect x="1018.6" y="722.6" width="1.4" height="1.4"/><rect x="1015.6" y="725.6" width="1.4" height="1.4"/><rect x="1018.6" y="725.6" width="1.4" height="1.4"/><rect x="1012.6" y="728.6" width="1.4" height="1.4"/><rect x="1015.6" y="728.6" width="1.4" height="1.4"/><rect x="1018.6" y="728.6" width="1.4" height="1.4"/></g></svg>
<svg class="a" style="left:11.25px;top:0;overflow:visible" width="1" height="1"><text x="0" y="697.56" font-size="12" fill="#7d7d7d" textLength="22.50" lengthAdjust="spacingAndGlyphs" style="white-space:pre">パッド</text></svg>
<svg class="a" style="left:58.75px;top:0;overflow:visible" width="1" height="1"><text x="0" y="697.56" font-size="12" fill="#7d7d7d" textLength="15.00" lengthAdjust="spacingAndGlyphs" style="white-space:pre">ビア</text></svg>
<svg class="a" style="left:98.75px;top:0;overflow:visible" width="1" height="1"><text x="0" y="697.56" font-size="12" fill="#7d7d7d" textLength="57.50" lengthAdjust="spacingAndGlyphs" style="white-space:pre">配線セグメント</text></svg>
<svg class="a" style="left:181.25px;top:0;overflow:visible" width="1" height="1"><text x="0" y="697.56" font-size="12" fill="#7d7d7d" textLength="22.50" lengthAdjust="spacingAndGlyphs" style="white-space:pre">ネット</text></svg>
<svg class="a" style="left:228.75px;top:0;overflow:visible" width="1" height="1"><text x="0" y="697.56" font-size="12" fill="#7d7d7d" textLength="31.00" lengthAdjust="spacingAndGlyphs" style="white-space:pre">未配線</text></svg>
<svg class="a" style="left:11.25px;top:0;overflow:visible" width="1" height="1"><text x="0" y="711.87" font-size="10" fill="#7d7d7d" textLength="10.75" lengthAdjust="spacingAndGlyphs" style="white-space:pre">29</text></svg>
<svg class="a" style="left:58.75px;top:0;overflow:visible" width="1" height="1"><text x="0" y="711.87" font-size="10" fill="#7d7d7d" textLength="5.50" lengthAdjust="spacingAndGlyphs" style="white-space:pre">0</text></svg>
<svg class="a" style="left:98.75px;top:0;overflow:visible" width="1" height="1"><text x="0" y="711.87" font-size="10" fill="#7d7d7d" textLength="10.75" lengthAdjust="spacingAndGlyphs" style="white-space:pre">42</text></svg>
<svg class="a" style="left:181.25px;top:0;overflow:visible" width="1" height="1"><text x="0" y="711.87" font-size="10" fill="#7d7d7d" textLength="10.75" lengthAdjust="spacingAndGlyphs" style="white-space:pre">13</text></svg>
<svg class="a" style="left:228.75px;top:0;overflow:visible" width="1" height="1"><text x="0" y="711.87" font-size="10" fill="#7d7d7d" textLength="5.50" lengthAdjust="spacingAndGlyphs" style="white-space:pre">0</text></svg>
<div class="a" style="left:93.5px;top:714px;width:1px;height:19px;background:#dadada"></div>
<div class="a" style="left:161px;top:714px;width:1px;height:19px;background:#dadada"></div>
<div class="a" style="left:300.5px;top:714px;width:1px;height:19px;background:#dadada"></div>
<div class="a" style="left:517.5px;top:714px;width:1px;height:19px;background:#dadada"></div>
<div class="a" style="left:677px;top:714px;width:1px;height:19px;background:#dadada"></div>
<div class="a" style="left:724.5px;top:714px;width:1px;height:19px;background:#dadada"></div>
<div class="a" style="left:873.5px;top:714px;width:1px;height:19px;background:#dadada"></div>
<svg class="a" style="left:97.50px;top:0;overflow:visible" width="1" height="1"><text x="0" y="727.91" font-size="11" fill="#2a2a2a" textLength="27.50" lengthAdjust="spacingAndGlyphs" style="white-space:pre">Z 3.39</text></svg>
<svg class="a" style="left:165.00px;top:0;overflow:visible" width="1" height="1"><text x="0" y="727.91" font-size="11" fill="#2a2a2a" textLength="96.00" lengthAdjust="spacingAndGlyphs" style="white-space:pre">X 111.5000&nbsp; Y 75.5000</text></svg>
<svg class="a" style="left:304.00px;top:0;overflow:visible" width="1" height="1"><text x="0" y="727.91" font-size="11" fill="#2a2a2a" textLength="169.00" lengthAdjust="spacingAndGlyphs" style="white-space:pre">dx 111.5000&nbsp; dy 75.5000&nbsp; dist 134.6570</text></svg>
<svg class="a" style="left:521.50px;top:0;overflow:visible" width="1" height="1"><text x="0" y="727.91" font-size="11" fill="#2a2a2a" textLength="60.00" lengthAdjust="spacingAndGlyphs" style="white-space:pre">グリッド 0.5000</text></svg>
<svg class="a" style="left:681.50px;top:0;overflow:visible" width="1" height="1"><text x="0" y="727.91" font-size="11" fill="#2a2a2a" textLength="16.75" lengthAdjust="spacingAndGlyphs" style="white-space:pre">mm</text></svg>
</body></html>
